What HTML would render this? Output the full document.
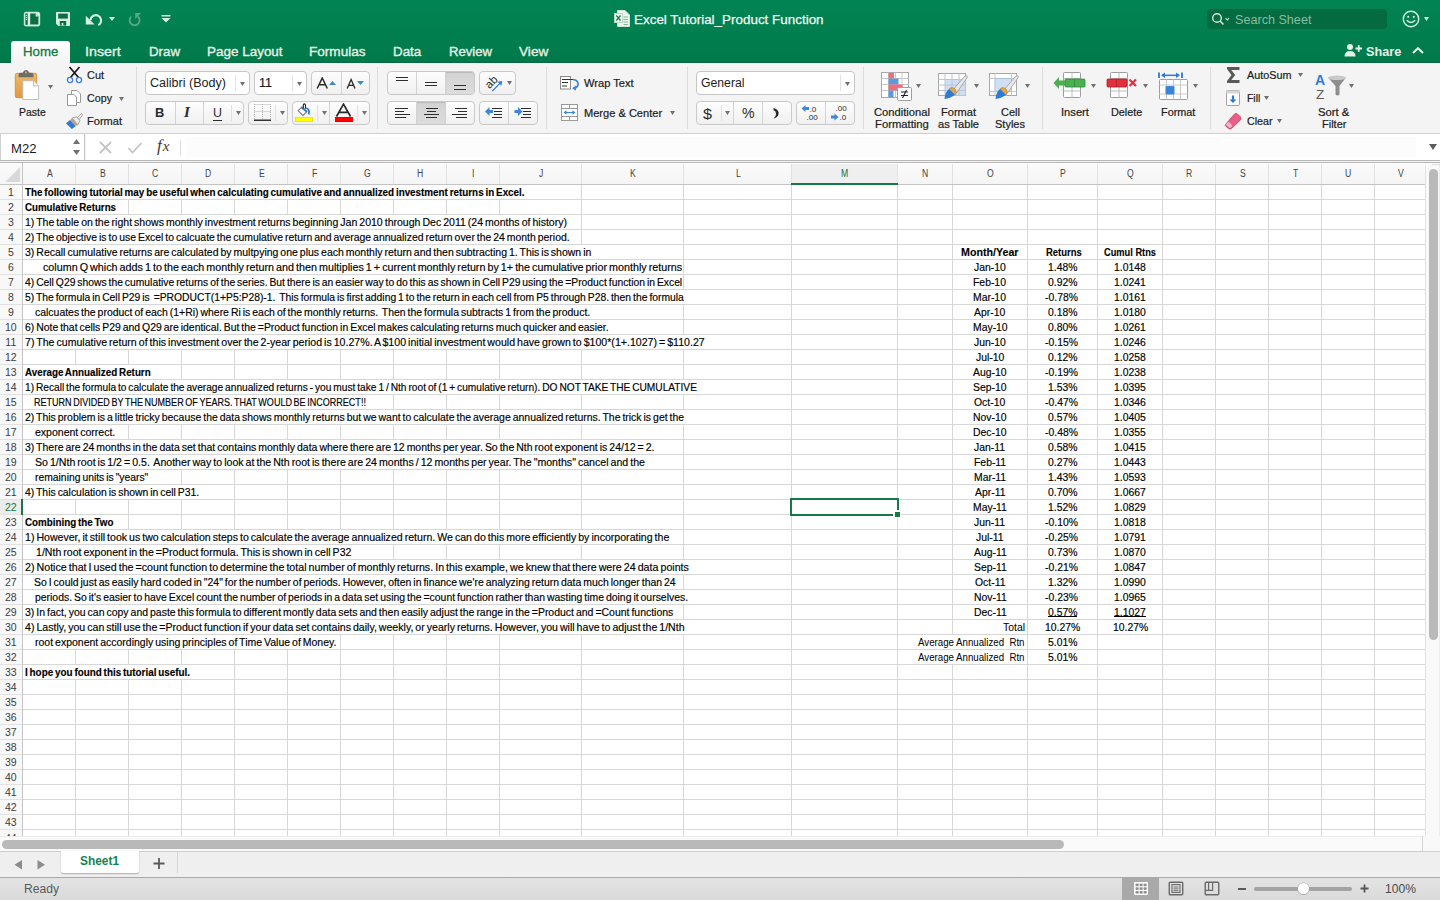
<!DOCTYPE html>
<html><head><meta charset="utf-8"><title>Excel Tutorial_Product Function</title>
<style>
html,body{margin:0;padding:0;width:1440px;height:900px;overflow:hidden;background:#fff;font-family:"Liberation Sans",sans-serif}
.a{position:absolute;display:block}
.t{position:absolute;white-space:pre;transform-origin:0 0;font-family:"Liberation Sans",sans-serif}
</style></head><body>
<div class="a" style="left:0px;top:0px;width:1440px;height:63px;background:linear-gradient(#018453,#017b4c 85%,#00784a)"></div><div class="a" style="left:0px;top:62px;width:1440px;height:1px;background:#066a42"></div><svg class="a" style="left:23px;top:11px;" width="18" height="16" viewBox="0 0 18 16"><rect x="1.3" y="1.3" width="15.4" height="13.6" rx="1.6" fill="#d9eee2" stroke="#d9eee2" stroke-width="1"/><rect x="2.4" y="2.4" width="2.3" height="11.4" fill="#0a6e40"/><circle cx="3.55" cy="4.4" r=".65" fill="#d9eee2"/><circle cx="3.55" cy="6.4" r=".65" fill="#d9eee2"/><circle cx="3.55" cy="8.4" r=".65" fill="#d9eee2"/><path d="M7.2 2.6H12.6L15.4 5.4V13.6H7.2Z" fill="#0a6e40"/><path d="M12.6 2.6V5.4H15.4" fill="#d9eee2"/></svg><svg class="a" style="left:55px;top:11px;" width="16" height="16" viewBox="0 0 16 16"><path d="M1.5 1.5H14.5V14.5H3.2L1.5 12.8Z" fill="#d9eee2" stroke="#d9eee2" stroke-linejoin="round"/><rect x="3.2" y="2.6" width="9.6" height="5" fill="#0a6e40"/><rect x="4.8" y="10" width="6.4" height="4.6" fill="#0a6e40"/><rect x="6.6" y="12" width="1.8" height="2.6" fill="#d9eee2"/></svg><svg class="a" style="left:85px;top:12px;" width="18" height="15" viewBox="0 0 18 15"><path d="M5.5 8.2A5.3 5.3 0 1 1 13.2 13.2" fill="none" stroke="#d9eee2" stroke-width="2"/><path d="M0.8 3.8V12.6H9.6Z" fill="#d9eee2"/></svg><svg class="a" style="left:109px;top:17px;" width="6" height="4" viewBox="0 0 6 4"><path d="M0 0H6L3.0 4Z" fill="#d9eee2"/></svg><svg class="a" style="left:128px;top:12px;" width="15" height="15" viewBox="0 0 15 15"><path d="M3.2 4.6A5 5 0 1 0 9.8 4.4" fill="none" stroke="#55a982" stroke-width="1.9"/><path d="M7.2 1H13.2L7.2 7Z" fill="#55a982"/></svg><svg class="a" style="left:161px;top:14px;" width="10" height="10" viewBox="0 0 10 10"><rect x="0.5" y="1" width="9" height="1.5" fill="#d9eee2"/><path d="M0.5 4H9.5L5 8.5Z" fill="#d9eee2"/></svg><svg class="a" style="left:614px;top:10px;" width="16" height="17" viewBox="0 0 16 17"><path d="M3.5 0.5H11L15.5 5V16.5H3.5Z" fill="#eef6f1" stroke="#cfe3d8"/><rect x="0.5" y="3.5" width="8" height="9" fill="#f3f9f5" stroke="#b9d8c6"/><path d="M2.3 5.5L6.5 10.5M6.5 5.5L2.3 10.5" stroke="#1d7a4c" stroke-width="1.3"/><path d="M9.5 7H14M9.5 9.5H14M9.5 12H14M9.5 14.5H14" stroke="#7db698" stroke-width="1"/></svg><div class="a" style="left:1207px;top:9px;width:180px;height:20px;background:#046a3f;border-radius:4px"></div><svg class="a" style="left:1211px;top:12px;" width="20" height="14" viewBox="0 0 20 14"><circle cx="6" cy="6" r="4.3" fill="none" stroke="#d4eadd" stroke-width="1.4"/><path d="M9 9L12.5 12.5" stroke="#d4eadd" stroke-width="1.6"/><path d="M14.5 6L16.3 8L18 6" fill="none" stroke="#d4eadd" stroke-width="1.1"/></svg><svg class="a" style="left:1401px;top:9px;" width="20" height="20" viewBox="0 0 20 20"><circle cx="10" cy="10" r="7.7" fill="none" stroke="#d9eee2" stroke-width="1.4"/><circle cx="7.2" cy="7.8" r="1.1" fill="#d9eee2"/><circle cx="12.8" cy="7.8" r="1.1" fill="#d9eee2"/><path d="M5.8 11.2Q10 15.6 14.2 11.2" fill="none" stroke="#d9eee2" stroke-width="1.5"/></svg><svg class="a" style="left:1424px;top:17px;" width="5" height="4" viewBox="0 0 5 4"><path d="M0 0H5L2.5 4Z" fill="#d9eee2"/></svg><div class="a" style="left:11px;top:41px;width:59px;height:22px;background:linear-gradient(#fefefe,#f4f4f4);border-radius:3px 3px 0 0"></div><svg class="a" style="left:1344px;top:43px;" width="19" height="14" viewBox="0 0 19 14"><circle cx="6" cy="4" r="3" fill="#e3f1e8"/><path d="M0.5 13.5Q0.5 8 6 8Q11.5 8 11.5 13.5Z" fill="#e3f1e8"/><path d="M11.5 5.5H18M14.75 2.25V8.75" stroke="#e3f1e8" stroke-width="1.8"/></svg><svg class="a" style="left:1412px;top:47px;" width="12" height="7" viewBox="0 0 12 7"><path d="M1 6L6 1.2L11 6" fill="none" stroke="#e3f1e8" stroke-width="2"/></svg><div class="a" style="left:0px;top:63px;width:1440px;height:70px;background:#f4f4f4"></div><div class="a" style="left:0px;top:133px;width:1440px;height:1px;background:#cfcfcf"></div><div class="a" style="left:0px;top:134px;width:1440px;height:26px;background:#fff"></div><div class="a" style="left:0px;top:134px;width:1px;height:26px;background:#cfcfcf"></div><div class="a" style="left:84px;top:134px;width:1px;height:26px;background:#c9c9c9"></div><div class="a" style="left:85px;top:134px;width:1px;height:26px;background:#f0f0f0"></div><div class="a" style="left:186px;top:137px;width:1230px;height:20px;background:#fcfcfc"></div><svg class="a" style="left:73px;top:139px;" width="7" height="5" viewBox="0 0 7 5"><path d="M0 5H7L3.5 0Z" fill="#707070"/></svg><svg class="a" style="left:73px;top:150px;" width="7" height="5" viewBox="0 0 7 5"><path d="M0 0H7L3.5 5Z" fill="#707070"/></svg><svg class="a" style="left:99px;top:141px;" width="13" height="13" viewBox="0 0 13 13"><path d="M1 1L12 12M12 1L1 12" stroke="#c4c4c4" stroke-width="1.8"/></svg><svg class="a" style="left:127px;top:142px;" width="16" height="12" viewBox="0 0 16 12"><path d="M1.5 6L5.5 10.5L14.5 1" fill="none" stroke="#c4c4c4" stroke-width="1.8"/></svg><div class="t" style="left:157px;top:136px;font-family:'Liberation Serif';font-style:italic;font-size:17px;line-height:20px;color:#3a3a3a">f<span style="font-size:15px;position:relative;left:1px">x</span></div><div class="a" style="left:180px;top:140px;width:1px;height:16px;background:#dedede"></div><svg class="a" style="left:1429px;top:144px;" width="8" height="6" viewBox="0 0 8 6"><path d="M0 0H8L4.0 6Z" fill="#5c5c5c"/></svg><div class="a" style="left:0px;top:160px;width:1440px;height:1px;background:#b6b6b6"></div><div class="a" style="left:0px;top:161px;width:1440px;height:1px;background:#f5f5f5"></div><div class="a" style="left:0px;top:162px;width:1440px;height:1px;background:#b6b6b6"></div><div class="a" style="left:1425px;top:163px;width:15px;height:673px;background:#f9f9f9"></div><div class="a" style="left:1425px;top:166px;width:1px;height:670px;background:#e3e3e3"></div><div class="a" style="left:1439px;top:163px;width:1px;height:688px;background:#ededed"></div><div class="a" style="left:1432px;top:164px;width:8px;height:1px;background:#e0e0e0"></div><div class="a" style="left:1429px;top:169px;width:9px;height:471px;background:#b9b9b9;border-radius:4.5px"></div><div class="a" style="left:0px;top:836px;width:1425px;height:15px;background:#fafafa"></div><div class="a" style="left:0px;top:836px;width:1425px;height:1px;background:#ececec"></div><div class="a" style="left:2px;top:840px;width:1062px;height:9px;background:#b9b9b9;border-radius:4.5px"></div><div class="a" style="left:1422px;top:836px;width:1px;height:15px;background:#d5d5d5"></div><div class="a" style="left:1425px;top:836px;width:15px;height:15px;background:#f9f9f9"></div><div class="a" style="left:0px;top:851px;width:1440px;height:1px;background:#cdcdcd"></div><div class="a" style="left:0px;top:852px;width:1440px;height:25px;background:#efefef"></div><div class="a" style="left:61px;top:851px;width:78px;height:22px;background:#fff;box-shadow:0 1px 1.5px rgba(0,0,0,.28);border-radius:0 0 2px 2px"></div><svg class="a" style="left:13px;top:858px;" width="10" height="13" viewBox="0 0 10 13"><path d="M9 2V11.5L1.5 6.75Z" fill="#8c8c8c"/></svg><svg class="a" style="left:36px;top:858px;" width="10" height="13" viewBox="0 0 10 13"><path d="M1.5 2V11.5L9 6.75Z" fill="#8c8c8c"/></svg><svg class="a" style="left:152.5px;top:857px;" width="12" height="13" viewBox="0 0 12 13"><path d="M6 1V12M0.5 6.5H11.5" stroke="#5a5a5a" stroke-width="1.8"/></svg><div class="a" style="left:177px;top:852px;width:1px;height:21px;background:#d6d6d6"></div><div class="a" style="left:0px;top:877px;width:1440px;height:1px;background:#a9a9a9"></div><div class="a" style="left:0px;top:878px;width:1440px;height:22px;background:linear-gradient(#e3e3e3,#dadada)"></div><div class="a" style="left:1122px;top:878px;width:37px;height:22px;background:#a9a9a9"></div><svg class="a" style="left:1133px;top:881px;" width="16" height="15" viewBox="0 0 16 15"><rect x="1" y="1" width="14" height="13" rx="1" fill="#fff"/><g fill="#8f8f8f"><rect x="2.6" y="2.6" width="3" height="2.6"/><rect x="6.6" y="2.6" width="3" height="2.6"/><rect x="10.6" y="2.6" width="3" height="2.6"/><rect x="2.6" y="6.3" width="3" height="2.6"/><rect x="6.6" y="6.3" width="3" height="2.6"/><rect x="10.6" y="6.3" width="3" height="2.6"/><rect x="2.6" y="10" width="3" height="2.6"/><rect x="6.6" y="10" width="3" height="2.6"/><rect x="10.6" y="10" width="3" height="2.6"/></g></svg><svg class="a" style="left:1168px;top:881px;" width="16" height="15" viewBox="0 0 16 15"><rect x="1.25" y="1.25" width="13.5" height="12.5" rx="1" fill="none" stroke="#6a6a6a" stroke-width="1.4"/><rect x="4" y="3.6" width="8" height="7.8" fill="none" stroke="#6a6a6a" stroke-width="1.1"/><path d="M5.6 6H10.4M5.6 7.8H10.4M5.6 9.6H10.4" stroke="#6a6a6a" stroke-width=".9"/></svg><svg class="a" style="left:1204px;top:881px;" width="16" height="15" viewBox="0 0 16 15"><rect x="1.25" y="1.25" width="13.5" height="12.5" rx="1" fill="none" stroke="#6a6a6a" stroke-width="1.4"/><path d="M1.25 9.3H8.6V1.25M4.6 1.25V9.3" fill="none" stroke="#6a6a6a" stroke-width="1.2"/></svg><div class="a" style="left:1238px;top:888px;width:8px;height:2px;background:#5a5a5a"></div><div class="a" style="left:1254px;top:887px;width:98px;height:3.5px;background:#a3a3a3;border-radius:2px"></div><div class="a" style="left:1298px;top:882.5px;width:11px;height:11px;border-radius:50%;background:#fff;box-shadow:0 0 0 0.6px #b0b0b0,0 1px 1px rgba(0,0,0,.2)"></div><svg class="a" style="left:1360px;top:884px;" width="9" height="9" viewBox="0 0 9 9"><path d="M4.5 0.5V8.5M0.5 4.5H8.5" stroke="#555" stroke-width="1.8"/></svg><div class="a" style="left:136px;top:67px;width:1px;height:62px;background:#dcdcdc"></div><div class="a" style="left:377px;top:67px;width:1px;height:62px;background:#dcdcdc"></div><div class="a" style="left:546px;top:67px;width:1px;height:62px;background:#dcdcdc"></div><div class="a" style="left:687px;top:67px;width:1px;height:62px;background:#dcdcdc"></div><div class="a" style="left:863px;top:67px;width:1px;height:62px;background:#dcdcdc"></div><div class="a" style="left:1042px;top:67px;width:1px;height:62px;background:#dcdcdc"></div><div class="a" style="left:1210px;top:67px;width:1px;height:62px;background:#dcdcdc"></div><svg class="a" style="left:14px;top:69px;" width="26" height="32" viewBox="0 0 26 32"><defs><linearGradient id="cb" x1="0" y1="0" x2="0" y2="1"><stop offset="0" stop-color="#f0b868"/><stop offset="1" stop-color="#e09a3c"/></linearGradient></defs><rect x="1.3" y="4.3" width="21.4" height="24.4" rx="1.8" fill="url(#cb)" stroke="#c98a35" stroke-width=".8"/><path d="M4.5 8.3V6Q4.5 3.8 7 3.8H8.8Q9.5 1 12 1Q14.5 1 15.2 3.8H17Q19.5 3.8 19.5 6V8.3Z" fill="#6d6d6d"/><circle cx="12" cy="3.4" r="1" fill="#e8a94f"/><path d="M8.8 11.8H19.5L24.6 16.9V30.5H8.8Z" fill="#fff" stroke="#b9b9b9" stroke-width=".9" stroke-linejoin="round"/><path d="M19.5 11.8V16.9H24.6" fill="#f3f3f3" stroke="#b9b9b9" stroke-width=".9" stroke-linejoin="round"/></svg><svg class="a" style="left:48px;top:85px;" width="5" height="4" viewBox="0 0 5 4"><path d="M0 0H5L2.5 4Z" fill="#707070"/></svg><svg class="a" style="left:66px;top:66px;" width="17" height="18" viewBox="0 0 17 18"><path d="M3.5 1L12.5 11.5M13.5 1L4.5 11.5" stroke="#1a1a1a" stroke-width="1.7"/><circle cx="4" cy="14" r="2.6" fill="none" stroke="#3d7fd6" stroke-width="1.3"/><circle cx="13" cy="14" r="2.6" fill="none" stroke="#3d7fd6" stroke-width="1.3"/></svg><svg class="a" style="left:66px;top:89px;" width="17" height="18" viewBox="0 0 17 18"><path d="M5.5 1.5H11L14.5 5V13.5H5.5Z" fill="#fff" stroke="#9a9a9a"/><path d="M1.5 5.5H8L10.5 8V16.5H1.5Z" fill="#fff" stroke="#9a9a9a"/></svg><svg class="a" style="left:119px;top:97px;" width="5" height="4" viewBox="0 0 5 4"><path d="M0 0H5L2.5 4Z" fill="#707070"/></svg><svg class="a" style="left:65px;top:112px;" width="18" height="18" viewBox="0 0 18 18"><path d="M11.5 6.5L15.6 2.2Q17.3 0.9 17.8 2.6L14 8Z" fill="#f2f2f2" stroke="#8f8f8f" stroke-width=".8"/><path d="M6.8 6.2L11.6 4.8L15 8.6L12.6 13.2Z" fill="#ececec" stroke="#8f8f8f" stroke-width=".8"/><path d="M5 8L7.6 6L12.8 12.2L10.6 14.3Z" fill="#b5a48c"/><path d="M1 11.2L5 8L10.6 14.3L6.8 17Z" fill="#2f7ad6"/></svg><div class="a" style="left:145px;top:71px;width:105px;height:24px;box-sizing:border-box;border:1px solid #c6c6c6;border-radius:4px;background:#fff"></div><div class="a" style="left:235px;top:75px;width:1px;height:16px;background:#e2e2e2"></div><svg class="a" style="left:240px;top:82px;" width="5" height="4" viewBox="0 0 5 4"><path d="M0 0H5L2.5 4Z" fill="#707070"/></svg><div class="a" style="left:254px;top:71px;width:53px;height:24px;box-sizing:border-box;border:1px solid #c6c6c6;border-radius:4px;background:#fff"></div><div class="a" style="left:292px;top:75px;width:1px;height:16px;background:#e2e2e2"></div><svg class="a" style="left:297px;top:82px;" width="5" height="4" viewBox="0 0 5 4"><path d="M0 0H5L2.5 4Z" fill="#707070"/></svg><div class="a" style="left:311px;top:71px;width:59px;height:24px;box-sizing:border-box;border:1px solid #c9c9c9;border-radius:4px;background:linear-gradient(#fdfdfd,#f0f0f0)"></div><div class="a" style="left:341px;top:72px;width:1px;height:22px;background:#d3d3d3"></div><svg class="a" style="left:316px;top:77px;" width="13" height="12" viewBox="0 0 13 12"><path d="M1.2 11.5L6.25 1L11.3 11.5M3 7.8H9.5" fill="none" stroke="#2a2a2a" stroke-width="1.5" stroke-linejoin="miter"/></svg><svg class="a" style="left:329px;top:80.5px;" width="7" height="4" viewBox="0 0 7 4"><path d="M0 4H7L3.5 0Z" fill="#3d86d8"/></svg><svg class="a" style="left:346px;top:78px;" width="11" height="11" viewBox="0 0 11 11"><path d="M1.2 10.5L5.1 1.5L9 10.5M2.6 7.3H7.6" fill="none" stroke="#2a2a2a" stroke-width="1.3"/></svg><svg class="a" style="left:356.5px;top:81px;" width="7" height="4" viewBox="0 0 7 4"><path d="M0 0H7L3.5 4Z" fill="#3d86d8"/></svg><div class="a" style="left:145px;top:101px;width:99px;height:24px;box-sizing:border-box;border:1px solid #c9c9c9;border-radius:4px;background:linear-gradient(#fdfdfd,#f0f0f0)"></div><div class="a" style="left:175px;top:102px;width:1px;height:22px;background:#d3d3d3"></div><div class="a" style="left:203px;top:102px;width:1px;height:22px;background:#d3d3d3"></div><div class="a" style="left:231px;top:105px;width:1px;height:16px;background:#e0e0e0"></div><div class="t" style="left:184px;top:104px;font-family:'Liberation Serif';font-style:italic;font-size:15px;line-height:16px;color:#2a2a2a;font-weight:700">I</div><div class="a" style="left:213px;top:119.5px;width:9px;height:1.3px;background:#2a2a2a"></div><svg class="a" style="left:236px;top:111px;" width="5" height="4" viewBox="0 0 5 4"><path d="M0 0H5L2.5 4Z" fill="#707070"/></svg><div class="a" style="left:248px;top:101px;width:40px;height:24px;box-sizing:border-box;border:1px solid #c9c9c9;border-radius:4px;background:linear-gradient(#fdfdfd,#f0f0f0)"></div><div class="a" style="left:275px;top:105px;width:1px;height:16px;background:#e0e0e0"></div><svg class="a" style="left:254px;top:103px;" width="18" height="19" viewBox="0 0 18 19"><g stroke="#b5b5b5" stroke-width="1" stroke-dasharray="1 1"><path d="M0.5 1V16M8.5 1V16M16.5 1V16M0.5 1.5H17M0.5 8.5H17"/></g><rect x="0" y="16.5" width="17" height="1.5" fill="#333"/></svg><svg class="a" style="left:280px;top:111px;" width="5" height="4" viewBox="0 0 5 4"><path d="M0 0H5L2.5 4Z" fill="#707070"/></svg><div class="a" style="left:292px;top:101px;width:78px;height:24px;box-sizing:border-box;border:1px solid #c9c9c9;border-radius:4px;background:linear-gradient(#fdfdfd,#f0f0f0)"></div><div class="a" style="left:317px;top:105px;width:1px;height:16px;background:#e0e0e0"></div><div class="a" style="left:329px;top:102px;width:1px;height:22px;background:#d3d3d3"></div><div class="a" style="left:357px;top:105px;width:1px;height:16px;background:#e0e0e0"></div><svg class="a" style="left:292px;top:100px;" width="22" height="18" viewBox="0 0 22 18"><path d="M6.2 10.6L10 6.8L14.9 11.3L11 15.6Z" fill="#fff" stroke="#7a7a7a" stroke-width="1.1" stroke-linejoin="round"/><path d="M9.4 7.3L14.9 11.9" stroke="#2f7ad6" stroke-width="1.7"/><path d="M13.5 8.8V5Q12.5 2.8 11.3 4.8V8.2" fill="none" stroke="#222" stroke-width="1.1"/><path d="M14.3 8Q18.2 9.5 16.6 14.4" fill="none" stroke="#2f7ad6" stroke-width="1.8"/></svg><div class="a" style="left:295px;top:117px;width:18px;height:5px;background:#ffff00;box-shadow:inset 0 0 0 0.6px #dada00;border-radius:1px"></div><svg class="a" style="left:322px;top:111px;" width="5" height="4" viewBox="0 0 5 4"><path d="M0 0H5L2.5 4Z" fill="#707070"/></svg><svg class="a" style="left:334px;top:103px;" width="19" height="14" viewBox="0 0 19 14"><path d="M2.5 13.5L9.5 1.2L16.5 13.5M5 9.3H14" fill="none" stroke="#2a2a2a" stroke-width="1.7"/></svg><div class="a" style="left:335px;top:117px;width:18px;height:5px;background:#ff0000;box-shadow:inset 0 0 0 0.6px #d40000;border-radius:1px"></div><svg class="a" style="left:362px;top:111px;" width="5" height="4" viewBox="0 0 5 4"><path d="M0 0H5L2.5 4Z" fill="#707070"/></svg><div class="a" style="left:387px;top:71px;width:88px;height:24px;box-sizing:border-box;border:1px solid #c9c9c9;border-radius:4px;background:linear-gradient(#fdfdfd,#f0f0f0)"></div><div class="a" style="left:416px;top:72px;width:1px;height:22px;background:#d3d3d3"></div><div class="a" style="left:445px;top:72px;width:1px;height:22px;background:#d3d3d3"></div><div class="a" style="left:446px;top:72px;width:28px;height:22px;background:linear-gradient(#d3d3d3,#dcdcdc);box-shadow:inset 0 1px 1px rgba(0,0,0,.12);border-radius:0px 3px 3px 0px"></div><div class="a" style="left:396px;top:77px;width:12px;height:1px;background:#2e2e2e"></div><div class="a" style="left:396px;top:80px;width:12px;height:1px;background:#2e2e2e"></div><div class="a" style="left:425px;top:82px;width:12px;height:1px;background:#2e2e2e"></div><div class="a" style="left:425px;top:85px;width:12px;height:1px;background:#2e2e2e"></div><div class="a" style="left:454px;top:85px;width:12px;height:1px;background:#2e2e2e"></div><div class="a" style="left:454px;top:89px;width:12px;height:1px;background:#2e2e2e"></div><div class="a" style="left:479px;top:71px;width:37px;height:24px;box-sizing:border-box;border:1px solid #c9c9c9;border-radius:4px;background:linear-gradient(#fdfdfd,#f0f0f0)"></div><svg class="a" style="left:482px;top:72px;" width="24" height="22" viewBox="0 0 24 22"><text x="0" y="0" text-anchor="middle" transform="translate(12 12.8) rotate(-45)" font-family="Liberation Sans" font-size="11.5" fill="#2a2a2a">ab</text><path d="M10.3 19L18.5 10.8" stroke="#2f7ad6" stroke-width="1.1"/><path d="M20.2 9L15.5 9.8L19.4 13.7Z" fill="#2f7ad6"/></svg><svg class="a" style="left:507px;top:81px;" width="5" height="4" viewBox="0 0 5 4"><path d="M0 0H5L2.5 4Z" fill="#707070"/></svg><div class="a" style="left:387px;top:101px;width:88px;height:24px;box-sizing:border-box;border:1px solid #c9c9c9;border-radius:4px;background:linear-gradient(#fdfdfd,#f0f0f0)"></div><div class="a" style="left:416px;top:102px;width:1px;height:22px;background:#d3d3d3"></div><div class="a" style="left:445px;top:102px;width:1px;height:22px;background:#d3d3d3"></div><div class="a" style="left:417px;top:102px;width:28px;height:22px;background:linear-gradient(#d3d3d3,#dcdcdc);box-shadow:inset 0 1px 1px rgba(0,0,0,.12);border-radius:0px 0px 0px 0px"></div><div class="a" style="left:395px;top:107.8px;width:12.5px;height:1.3px;background:#2e2e2e"></div><div class="a" style="left:395px;top:110.9px;width:9px;height:1.3px;background:#2e2e2e"></div><div class="a" style="left:395px;top:113.9px;width:15px;height:1.3px;background:#2e2e2e"></div><div class="a" style="left:395px;top:117px;width:11px;height:1.3px;background:#2e2e2e"></div><div class="a" style="left:425.5px;top:107.8px;width:12.0px;height:1.3px;background:#2e2e2e"></div><div class="a" style="left:427px;top:110.9px;width:9px;height:1.3px;background:#2e2e2e"></div><div class="a" style="left:424px;top:113.9px;width:15px;height:1.3px;background:#2e2e2e"></div><div class="a" style="left:426px;top:117px;width:11px;height:1.3px;background:#2e2e2e"></div><div class="a" style="left:454.5px;top:107.8px;width:12.5px;height:1.3px;background:#2e2e2e"></div><div class="a" style="left:458px;top:110.9px;width:9px;height:1.3px;background:#2e2e2e"></div><div class="a" style="left:452px;top:113.9px;width:15px;height:1.3px;background:#2e2e2e"></div><div class="a" style="left:456px;top:117px;width:11px;height:1.3px;background:#2e2e2e"></div><div class="a" style="left:479px;top:101px;width:59px;height:24px;box-sizing:border-box;border:1px solid #c9c9c9;border-radius:4px;background:linear-gradient(#fdfdfd,#f0f0f0)"></div><div class="a" style="left:508px;top:102px;width:1px;height:22px;background:#d3d3d3"></div><svg class="a" style="left:484px;top:105px;" width="20" height="14" viewBox="0 0 20 14"><path d="M1 6.5L5.5 2V5H9V8H5.5V11Z" fill="#3d86d8"/><path d="M8 3.5H18M10 6.5H18M10 9.5H18M8 12.5H18" stroke="#2e2e2e" stroke-width="1"/></svg><svg class="a" style="left:513px;top:105px;" width="20" height="14" viewBox="0 0 20 14"><path d="M9.5 6.5L5 2V5H1.5V8H5V11Z" fill="#3d86d8"/><path d="M8 3.5H18M10 6.5H18M10 9.5H18M8 12.5H18" stroke="#2e2e2e" stroke-width="1"/></svg><svg class="a" style="left:559px;top:76px;" width="22" height="15" viewBox="0 0 22 15"><rect x="1.5" y="0.5" width="10" height="12.5" fill="#fff" stroke="#8a8a8a"/><path d="M3 3.5H14M3 6.5H9M3 10H8" stroke="#333" stroke-width="1"/><path d="M14 3.5Q19.5 4 19 9Q18 12.2 14.5 12" fill="none" stroke="#3d86d8" stroke-width="1.7"/><path d="M17 9.5L13.2 12.2L16.8 14.8Z" fill="#3d86d8"/></svg><svg class="a" style="left:560px;top:103px;" width="19" height="18" viewBox="0 0 19 18"><rect x="1.5" y="1.5" width="16" height="16" fill="#fff" stroke="#9a9a9a"/><path d="M1.5 5.5H17.5M1.5 13.5H17.5M9.5 1.5V5.5M9.5 13.5V17.5" stroke="#9a9a9a"/><path d="M5 9.5H14" stroke="#3d86d8" stroke-width="1.2"/><path d="M3.5 9.5L6.5 7.2V11.8Z M15.5 9.5L12.5 7.2V11.8Z" fill="#3d86d8"/></svg><svg class="a" style="left:670px;top:111px;" width="5" height="4" viewBox="0 0 5 4"><path d="M0 0H5L2.5 4Z" fill="#707070"/></svg><div class="a" style="left:696px;top:71px;width:159px;height:24px;box-sizing:border-box;border:1px solid #c6c6c6;border-radius:4px;background:#fff"></div><div class="a" style="left:840px;top:75px;width:1px;height:16px;background:#e2e2e2"></div><svg class="a" style="left:845px;top:82px;" width="5" height="4" viewBox="0 0 5 4"><path d="M0 0H5L2.5 4Z" fill="#707070"/></svg><div class="a" style="left:696px;top:101px;width:96px;height:24px;box-sizing:border-box;border:1px solid #c9c9c9;border-radius:4px;background:linear-gradient(#fdfdfd,#f0f0f0)"></div><div class="a" style="left:721px;top:105px;width:1px;height:16px;background:#e0e0e0"></div><div class="a" style="left:733px;top:102px;width:1px;height:22px;background:#d3d3d3"></div><div class="a" style="left:762px;top:102px;width:1px;height:22px;background:#d3d3d3"></div><svg class="a" style="left:725px;top:111px;" width="5" height="4" viewBox="0 0 5 4"><path d="M0 0H5L2.5 4Z" fill="#707070"/></svg><svg class="a" style="left:771px;top:107px;" width="10" height="12" viewBox="0 0 10 12"><path d="M2.5 1Q8.5 2.5 7.5 7.5Q6.5 10.5 2.5 11.5Q5.5 9 5 6.5Q4.8 3.8 2.5 3.2Z" fill="#2a2a2a"/></svg><div class="a" style="left:796px;top:101px;width:59px;height:24px;box-sizing:border-box;border:1px solid #c9c9c9;border-radius:4px;background:linear-gradient(#fdfdfd,#f0f0f0)"></div><div class="a" style="left:825px;top:102px;width:1px;height:22px;background:#d3d3d3"></div><svg class="a" style="left:800px;top:104px;" width="24" height="18" viewBox="0 0 24 18"><path d="M1.5 4.5L5.5 1V3H9V6H5.5V8Z" fill="#3d86d8"/><text x="9.5" y="7.5" font-family="Liberation Sans" font-size="8" fill="#2a2a2a">.0</text><text x="6.5" y="15.5" font-family="Liberation Sans" font-size="8" fill="#2a2a2a">.00</text></svg><svg class="a" style="left:829px;top:104px;" width="24" height="18" viewBox="0 0 24 18"><text x="6.5" y="7" font-family="Liberation Sans" font-size="8" fill="#2a2a2a">.00</text><path d="M9.5 13L5.5 9.5V11.5H2V14.5H5.5V16.5Z" fill="#3d86d8"/><text x="10.5" y="15.5" font-family="Liberation Sans" font-size="8" fill="#2a2a2a">.0</text></svg><svg class="a" style="left:881px;top:72px;" width="32" height="30" viewBox="0 0 32 30"><rect x="0.5" y="0.5" width="27" height="25" fill="#fff" stroke="#a8a8a8"/><path d="M7.5 0.5V25.5M14.5 0.5V25.5M21 0.5V25.5M0.5 6.5H27.5M0.5 12.5H27.5M0.5 18.5H27.5" stroke="#c8c8c8"/><rect x="7.5" y="1" width="5.5" height="5.5" fill="#ef6d78"/><rect x="7.5" y="6.5" width="10" height="6" fill="#5a9be0"/><rect x="7.5" y="12.5" width="14" height="6" fill="#ef6d78"/><rect x="7.5" y="18.5" width="5" height="7" fill="#5a9be0"/><rect x="16.5" y="15.5" width="14" height="13" rx="1" fill="#fff" stroke="#a0a0a0"/><path d="M20 20H27M20 23.5H27M25.5 18L21.5 26" stroke="#222" stroke-width="1.1"/></svg><svg class="a" style="left:916px;top:84px;" width="5" height="4" viewBox="0 0 5 4"><path d="M0 0H5L2.5 4Z" fill="#707070"/></svg><svg class="a" style="left:938px;top:73px;" width="34" height="28" viewBox="0 0 34 28"><rect x="0.5" y="0.5" width="27" height="22" fill="#fff" stroke="#a8a8a8"/><rect x="7" y="6.5" width="20.5" height="16" fill="#cfe0f3"/><path d="M7 0.5V22.5M14 0.5V22.5M21 0.5V22.5M0.5 6.5H27.5M0.5 12H27.5M0.5 17.5H27.5" stroke="#b9c5d2"/><path d="M14.5 17.5L26.5 3.5Q29 1.5 29.5 4L18.5 20Z" fill="#e8e8e8" stroke="#9b9b9b" stroke-width=".8"/><path d="M11 16Q14 13 17.5 16.5Q19.5 19.5 17 22Z" fill="#e0a550" stroke="#b07a2e" stroke-width=".6"/><path d="M11 16Q7 19 6.5 26Q13 25 17 22Z" fill="#2f7ad6"/></svg><svg class="a" style="left:974px;top:84px;" width="5" height="4" viewBox="0 0 5 4"><path d="M0 0H5L2.5 4Z" fill="#707070"/></svg><svg class="a" style="left:989px;top:73px;" width="34" height="28" viewBox="0 0 34 28"><rect x="0.5" y="0.5" width="27" height="22" fill="#fff" stroke="#a8a8a8"/><rect x="6" y="5.5" width="16.5" height="13" fill="#cfe0f3" stroke="#a9c2de"/><path d="M6 0.5V5.5M22.5 0.5V5.5M0.5 5.5H6M22.5 5.5H27.5M0.5 18.5H6M22.5 18.5H27.5M6 18.5V22.5M22.5 18.5V22.5" stroke="#c8c8c8"/><path d="M14.5 17.5L26.5 3.5Q29 1.5 29.5 4L18.5 20Z" fill="#e8e8e8" stroke="#9b9b9b" stroke-width=".8"/><path d="M11 16Q14 13 17.5 16.5Q19.5 19.5 17 22Z" fill="#e0a550" stroke="#b07a2e" stroke-width=".6"/><path d="M11 16Q7 19 6.5 26Q13 25 17 22Z" fill="#2f7ad6"/></svg><svg class="a" style="left:1025px;top:84px;" width="5" height="4" viewBox="0 0 5 4"><path d="M0 0H5L2.5 4Z" fill="#707070"/></svg><svg class="a" style="left:1053px;top:72px;" width="34" height="28" viewBox="0 0 34 28"><rect x="10.5" y="0.5" width="17" height="25" rx="1" fill="#fff" stroke="#9d9d9d"/><path d="M19 0.5V25.5M10.5 6.5H27.5M10.5 19H27.5M10.5 13H27.5" stroke="#bcbcbc"/><rect x="12" y="7" width="20" height="8" rx="1" fill="#4caf50" stroke="#2e8b3a" stroke-width=".8"/><path d="M21.5 7V15" stroke="#2e8b3a" stroke-width=".8"/><path d="M0.5 11L6 5V8.5H12V13.5H6V17Z" fill="#4caf50"/></svg><svg class="a" style="left:1091px;top:84px;" width="5" height="4" viewBox="0 0 5 4"><path d="M0 0H5L2.5 4Z" fill="#707070"/></svg><svg class="a" style="left:1106px;top:72px;" width="34" height="28" viewBox="0 0 34 28"><rect x="4.5" y="0.5" width="17" height="25" rx="1" fill="#fff" stroke="#9d9d9d"/><path d="M13 0.5V25.5M4.5 6.5H21.5M4.5 19H21.5M4.5 13H21.5" stroke="#bcbcbc"/><rect x="1" y="7" width="20" height="8" rx="1" fill="#e0303e" stroke="#b31d2a" stroke-width=".8"/><path d="M10.5 7V15" stroke="#b31d2a" stroke-width=".8"/><path d="M23.5 7.5L30 14M30 7.5L23.5 14" stroke="#e0303e" stroke-width="2.2"/></svg><svg class="a" style="left:1143px;top:84px;" width="5" height="4" viewBox="0 0 5 4"><path d="M0 0H5L2.5 4Z" fill="#707070"/></svg><svg class="a" style="left:1158px;top:71px;" width="32" height="30" viewBox="0 0 32 30"><path d="M1 1.5V7M24 1.5V7" stroke="#2f7ad6" stroke-width="1.8"/><path d="M4 4.3H21" stroke="#2f7ad6" stroke-width="1.5"/><path d="M3 4.3L7 1.5V7Z M22 4.3L18 1.5V7Z" fill="#2f7ad6"/><rect x="1.5" y="8.5" width="28" height="20" rx="1" fill="#fff" stroke="#9d9d9d"/><path d="M1.5 14H29.5M1.5 23H29.5M8.5 8.5V28.5M15.5 8.5V28.5M22.5 8.5V28.5" stroke="#c9c9c9"/><rect x="7.5" y="15" width="9" height="8.5" rx="1" fill="#3a86d6"/></svg><svg class="a" style="left:1193px;top:84px;" width="5" height="4" viewBox="0 0 5 4"><path d="M0 0H5L2.5 4Z" fill="#707070"/></svg><svg class="a" style="left:1226px;top:66px;" width="15" height="18" viewBox="0 0 15 18"><path d="M1 1H13.5V4H5.3L9.2 9L5.3 14H13.5V17H1V15L5.5 9L1 3Z" fill="#5a5a5a"/></svg><svg class="a" style="left:1298px;top:73px;" width="5" height="4" viewBox="0 0 5 4"><path d="M0 0H5L2.5 4Z" fill="#707070"/></svg><svg class="a" style="left:1225px;top:89px;" width="16" height="18" viewBox="0 0 16 18"><rect x="1.5" y="1.5" width="13" height="15" rx="1" fill="#fff" stroke="#a2a2a2"/><rect x="1.5" y="1.5" width="13" height="3" fill="#d6d6d6"/><path d="M8 6.5V11.5" stroke="#2f7ad6" stroke-width="2.2"/><path d="M4.5 10.5H11.5L8 14Z" fill="#2f7ad6"/></svg><svg class="a" style="left:1264px;top:96px;" width="5" height="4" viewBox="0 0 5 4"><path d="M0 0H5L2.5 4Z" fill="#707070"/></svg><svg class="a" style="left:1224px;top:112px;" width="18" height="18" viewBox="0 0 18 18"><path d="M1.5 12.5L10.5 2Q12 0.8 13.5 2L16.5 5Q17.5 6.5 16.5 8L7.5 16.5Q6 17.5 4.5 16.5L1.5 14Q0.8 13.3 1.5 12.5Z" fill="#e85d8a" stroke="#c23d6b" stroke-width=".8"/><path d="M1.5 12.5L4.8 9.8L8.5 13.5L6 16.3Z" fill="#f6b3c9"/></svg><svg class="a" style="left:1277px;top:119px;" width="5" height="4" viewBox="0 0 5 4"><path d="M0 0H5L2.5 4Z" fill="#707070"/></svg><svg class="a" style="left:1314px;top:72px;" width="34" height="28" viewBox="0 0 34 28"><text x="1" y="13" font-family="Liberation Sans" font-size="14" font-weight="700" fill="#2f7ad6">A</text><text x="2" y="26.5" font-family="Liberation Sans" font-size="13.5" fill="#5a5a5a">Z</text><path d="M14 5.5Q23 3 32 5.5L25.5 14V22.5Q23.5 24.5 21.5 22.5V14Z" fill="#8e8e8e"/><ellipse cx="23" cy="5.8" rx="8.8" ry="2.3" fill="#c9c9c9"/></svg><svg class="a" style="left:1349px;top:84px;" width="5" height="4" viewBox="0 0 5 4"><path d="M0 0H5L2.5 4Z" fill="#707070"/></svg><div class="a" style="left:0px;top:163px;width:1425px;height:1px;background:#fff"></div><div class="a" style="left:0px;top:164px;width:1425px;height:20px;background:linear-gradient(#fafafa,#f5f5f5)"></div><div class="a" style="left:0px;top:184px;width:22px;height:652px;background:#f8f8f8"></div><svg class="a" style="left:4px;top:166px;" width="17" height="17" viewBox="0 0 17 17"><path d="M16 1V16H1.3Z" fill="#d9d9d9"/></svg><div class="a" style="left:792px;top:164px;width:105px;height:20px;background:#efefef"></div><div class="a" style="left:0px;top:499px;width:22px;height:15px;background:#ececec"></div><svg class="a" style="left:0;top:0" width="1440" height="900" shape-rendering="crispEdges"><rect x="23" y="199" width="1402" height="1" fill="#d7d7d7"/><rect x="0" y="199" width="22" height="1" fill="#e2e2e2"/><rect x="23" y="214" width="1402" height="1" fill="#d7d7d7"/><rect x="0" y="214" width="22" height="1" fill="#e2e2e2"/><rect x="23" y="229" width="1402" height="1" fill="#d7d7d7"/><rect x="0" y="229" width="22" height="1" fill="#e2e2e2"/><rect x="23" y="244" width="1402" height="1" fill="#d7d7d7"/><rect x="0" y="244" width="22" height="1" fill="#e2e2e2"/><rect x="23" y="259" width="1402" height="1" fill="#d7d7d7"/><rect x="0" y="259" width="22" height="1" fill="#e2e2e2"/><rect x="23" y="274" width="1402" height="1" fill="#d7d7d7"/><rect x="0" y="274" width="22" height="1" fill="#e2e2e2"/><rect x="23" y="289" width="1402" height="1" fill="#d7d7d7"/><rect x="0" y="289" width="22" height="1" fill="#e2e2e2"/><rect x="23" y="304" width="1402" height="1" fill="#d7d7d7"/><rect x="0" y="304" width="22" height="1" fill="#e2e2e2"/><rect x="23" y="319" width="1402" height="1" fill="#d7d7d7"/><rect x="0" y="319" width="22" height="1" fill="#e2e2e2"/><rect x="23" y="334" width="1402" height="1" fill="#d7d7d7"/><rect x="0" y="334" width="22" height="1" fill="#e2e2e2"/><rect x="23" y="349" width="1402" height="1" fill="#d7d7d7"/><rect x="0" y="349" width="22" height="1" fill="#e2e2e2"/><rect x="23" y="364" width="1402" height="1" fill="#d7d7d7"/><rect x="0" y="364" width="22" height="1" fill="#e2e2e2"/><rect x="23" y="379" width="1402" height="1" fill="#d7d7d7"/><rect x="0" y="379" width="22" height="1" fill="#e2e2e2"/><rect x="23" y="394" width="1402" height="1" fill="#d7d7d7"/><rect x="0" y="394" width="22" height="1" fill="#e2e2e2"/><rect x="23" y="409" width="1402" height="1" fill="#d7d7d7"/><rect x="0" y="409" width="22" height="1" fill="#e2e2e2"/><rect x="23" y="424" width="1402" height="1" fill="#d7d7d7"/><rect x="0" y="424" width="22" height="1" fill="#e2e2e2"/><rect x="23" y="439" width="1402" height="1" fill="#d7d7d7"/><rect x="0" y="439" width="22" height="1" fill="#e2e2e2"/><rect x="23" y="454" width="1402" height="1" fill="#d7d7d7"/><rect x="0" y="454" width="22" height="1" fill="#e2e2e2"/><rect x="23" y="469" width="1402" height="1" fill="#d7d7d7"/><rect x="0" y="469" width="22" height="1" fill="#e2e2e2"/><rect x="23" y="484" width="1402" height="1" fill="#d7d7d7"/><rect x="0" y="484" width="22" height="1" fill="#e2e2e2"/><rect x="23" y="499" width="1402" height="1" fill="#d7d7d7"/><rect x="0" y="499" width="22" height="1" fill="#e2e2e2"/><rect x="23" y="514" width="1402" height="1" fill="#d7d7d7"/><rect x="0" y="514" width="22" height="1" fill="#e2e2e2"/><rect x="23" y="529" width="1402" height="1" fill="#d7d7d7"/><rect x="0" y="529" width="22" height="1" fill="#e2e2e2"/><rect x="23" y="544" width="1402" height="1" fill="#d7d7d7"/><rect x="0" y="544" width="22" height="1" fill="#e2e2e2"/><rect x="23" y="559" width="1402" height="1" fill="#d7d7d7"/><rect x="0" y="559" width="22" height="1" fill="#e2e2e2"/><rect x="23" y="574" width="1402" height="1" fill="#d7d7d7"/><rect x="0" y="574" width="22" height="1" fill="#e2e2e2"/><rect x="23" y="589" width="1402" height="1" fill="#d7d7d7"/><rect x="0" y="589" width="22" height="1" fill="#e2e2e2"/><rect x="23" y="604" width="1402" height="1" fill="#d7d7d7"/><rect x="0" y="604" width="22" height="1" fill="#e2e2e2"/><rect x="23" y="619" width="1402" height="1" fill="#d7d7d7"/><rect x="0" y="619" width="22" height="1" fill="#e2e2e2"/><rect x="23" y="634" width="1402" height="1" fill="#d7d7d7"/><rect x="0" y="634" width="22" height="1" fill="#e2e2e2"/><rect x="23" y="649" width="1402" height="1" fill="#d7d7d7"/><rect x="0" y="649" width="22" height="1" fill="#e2e2e2"/><rect x="23" y="664" width="1402" height="1" fill="#d7d7d7"/><rect x="0" y="664" width="22" height="1" fill="#e2e2e2"/><rect x="23" y="679" width="1402" height="1" fill="#d7d7d7"/><rect x="0" y="679" width="22" height="1" fill="#e2e2e2"/><rect x="23" y="694" width="1402" height="1" fill="#d7d7d7"/><rect x="0" y="694" width="22" height="1" fill="#e2e2e2"/><rect x="23" y="709" width="1402" height="1" fill="#d7d7d7"/><rect x="0" y="709" width="22" height="1" fill="#e2e2e2"/><rect x="23" y="724" width="1402" height="1" fill="#d7d7d7"/><rect x="0" y="724" width="22" height="1" fill="#e2e2e2"/><rect x="23" y="739" width="1402" height="1" fill="#d7d7d7"/><rect x="0" y="739" width="22" height="1" fill="#e2e2e2"/><rect x="23" y="754" width="1402" height="1" fill="#d7d7d7"/><rect x="0" y="754" width="22" height="1" fill="#e2e2e2"/><rect x="23" y="769" width="1402" height="1" fill="#d7d7d7"/><rect x="0" y="769" width="22" height="1" fill="#e2e2e2"/><rect x="23" y="784" width="1402" height="1" fill="#d7d7d7"/><rect x="0" y="784" width="22" height="1" fill="#e2e2e2"/><rect x="23" y="799" width="1402" height="1" fill="#d7d7d7"/><rect x="0" y="799" width="22" height="1" fill="#e2e2e2"/><rect x="23" y="814" width="1402" height="1" fill="#d7d7d7"/><rect x="0" y="814" width="22" height="1" fill="#e2e2e2"/><rect x="23" y="829" width="1402" height="1" fill="#d7d7d7"/><rect x="0" y="829" width="22" height="1" fill="#e2e2e2"/><rect x="75" y="349" width="1" height="15" fill="#d7d7d7"/><rect x="75" y="499" width="1" height="15" fill="#d7d7d7"/><rect x="75" y="649" width="1" height="15" fill="#d7d7d7"/><rect x="75" y="679" width="1" height="15" fill="#d7d7d7"/><rect x="75" y="694" width="1" height="15" fill="#d7d7d7"/><rect x="75" y="709" width="1" height="15" fill="#d7d7d7"/><rect x="75" y="724" width="1" height="15" fill="#d7d7d7"/><rect x="75" y="739" width="1" height="15" fill="#d7d7d7"/><rect x="75" y="754" width="1" height="15" fill="#d7d7d7"/><rect x="75" y="769" width="1" height="15" fill="#d7d7d7"/><rect x="75" y="784" width="1" height="15" fill="#d7d7d7"/><rect x="75" y="799" width="1" height="15" fill="#d7d7d7"/><rect x="75" y="814" width="1" height="15" fill="#d7d7d7"/><rect x="75" y="829" width="1" height="7" fill="#d7d7d7"/><rect x="128" y="199" width="1" height="15" fill="#d7d7d7"/><rect x="128" y="349" width="1" height="15" fill="#d7d7d7"/><rect x="128" y="424" width="1" height="15" fill="#d7d7d7"/><rect x="128" y="499" width="1" height="15" fill="#d7d7d7"/><rect x="128" y="514" width="1" height="15" fill="#d7d7d7"/><rect x="128" y="649" width="1" height="15" fill="#d7d7d7"/><rect x="128" y="679" width="1" height="15" fill="#d7d7d7"/><rect x="128" y="694" width="1" height="15" fill="#d7d7d7"/><rect x="128" y="709" width="1" height="15" fill="#d7d7d7"/><rect x="128" y="724" width="1" height="15" fill="#d7d7d7"/><rect x="128" y="739" width="1" height="15" fill="#d7d7d7"/><rect x="128" y="754" width="1" height="15" fill="#d7d7d7"/><rect x="128" y="769" width="1" height="15" fill="#d7d7d7"/><rect x="128" y="784" width="1" height="15" fill="#d7d7d7"/><rect x="128" y="799" width="1" height="15" fill="#d7d7d7"/><rect x="128" y="814" width="1" height="15" fill="#d7d7d7"/><rect x="128" y="829" width="1" height="7" fill="#d7d7d7"/><rect x="181" y="199" width="1" height="15" fill="#d7d7d7"/><rect x="181" y="349" width="1" height="15" fill="#d7d7d7"/><rect x="181" y="364" width="1" height="15" fill="#d7d7d7"/><rect x="181" y="424" width="1" height="15" fill="#d7d7d7"/><rect x="181" y="469" width="1" height="15" fill="#d7d7d7"/><rect x="181" y="499" width="1" height="15" fill="#d7d7d7"/><rect x="181" y="514" width="1" height="15" fill="#d7d7d7"/><rect x="181" y="649" width="1" height="15" fill="#d7d7d7"/><rect x="181" y="679" width="1" height="15" fill="#d7d7d7"/><rect x="181" y="694" width="1" height="15" fill="#d7d7d7"/><rect x="181" y="709" width="1" height="15" fill="#d7d7d7"/><rect x="181" y="724" width="1" height="15" fill="#d7d7d7"/><rect x="181" y="739" width="1" height="15" fill="#d7d7d7"/><rect x="181" y="754" width="1" height="15" fill="#d7d7d7"/><rect x="181" y="769" width="1" height="15" fill="#d7d7d7"/><rect x="181" y="784" width="1" height="15" fill="#d7d7d7"/><rect x="181" y="799" width="1" height="15" fill="#d7d7d7"/><rect x="181" y="814" width="1" height="15" fill="#d7d7d7"/><rect x="181" y="829" width="1" height="7" fill="#d7d7d7"/><rect x="234" y="199" width="1" height="15" fill="#d7d7d7"/><rect x="234" y="349" width="1" height="15" fill="#d7d7d7"/><rect x="234" y="364" width="1" height="15" fill="#d7d7d7"/><rect x="234" y="424" width="1" height="15" fill="#d7d7d7"/><rect x="234" y="469" width="1" height="15" fill="#d7d7d7"/><rect x="234" y="484" width="1" height="15" fill="#d7d7d7"/><rect x="234" y="499" width="1" height="15" fill="#d7d7d7"/><rect x="234" y="514" width="1" height="15" fill="#d7d7d7"/><rect x="234" y="649" width="1" height="15" fill="#d7d7d7"/><rect x="234" y="664" width="1" height="15" fill="#d7d7d7"/><rect x="234" y="679" width="1" height="15" fill="#d7d7d7"/><rect x="234" y="694" width="1" height="15" fill="#d7d7d7"/><rect x="234" y="709" width="1" height="15" fill="#d7d7d7"/><rect x="234" y="724" width="1" height="15" fill="#d7d7d7"/><rect x="234" y="739" width="1" height="15" fill="#d7d7d7"/><rect x="234" y="754" width="1" height="15" fill="#d7d7d7"/><rect x="234" y="769" width="1" height="15" fill="#d7d7d7"/><rect x="234" y="784" width="1" height="15" fill="#d7d7d7"/><rect x="234" y="799" width="1" height="15" fill="#d7d7d7"/><rect x="234" y="814" width="1" height="15" fill="#d7d7d7"/><rect x="234" y="829" width="1" height="7" fill="#d7d7d7"/><rect x="287" y="199" width="1" height="15" fill="#d7d7d7"/><rect x="287" y="349" width="1" height="15" fill="#d7d7d7"/><rect x="287" y="364" width="1" height="15" fill="#d7d7d7"/><rect x="287" y="424" width="1" height="15" fill="#d7d7d7"/><rect x="287" y="469" width="1" height="15" fill="#d7d7d7"/><rect x="287" y="484" width="1" height="15" fill="#d7d7d7"/><rect x="287" y="499" width="1" height="15" fill="#d7d7d7"/><rect x="287" y="514" width="1" height="15" fill="#d7d7d7"/><rect x="287" y="649" width="1" height="15" fill="#d7d7d7"/><rect x="287" y="664" width="1" height="15" fill="#d7d7d7"/><rect x="287" y="679" width="1" height="15" fill="#d7d7d7"/><rect x="287" y="694" width="1" height="15" fill="#d7d7d7"/><rect x="287" y="709" width="1" height="15" fill="#d7d7d7"/><rect x="287" y="724" width="1" height="15" fill="#d7d7d7"/><rect x="287" y="739" width="1" height="15" fill="#d7d7d7"/><rect x="287" y="754" width="1" height="15" fill="#d7d7d7"/><rect x="287" y="769" width="1" height="15" fill="#d7d7d7"/><rect x="287" y="784" width="1" height="15" fill="#d7d7d7"/><rect x="287" y="799" width="1" height="15" fill="#d7d7d7"/><rect x="287" y="814" width="1" height="15" fill="#d7d7d7"/><rect x="287" y="829" width="1" height="7" fill="#d7d7d7"/><rect x="340" y="199" width="1" height="15" fill="#d7d7d7"/><rect x="340" y="349" width="1" height="15" fill="#d7d7d7"/><rect x="340" y="364" width="1" height="15" fill="#d7d7d7"/><rect x="340" y="424" width="1" height="15" fill="#d7d7d7"/><rect x="340" y="469" width="1" height="15" fill="#d7d7d7"/><rect x="340" y="484" width="1" height="15" fill="#d7d7d7"/><rect x="340" y="499" width="1" height="15" fill="#d7d7d7"/><rect x="340" y="514" width="1" height="15" fill="#d7d7d7"/><rect x="340" y="634" width="1" height="15" fill="#d7d7d7"/><rect x="340" y="649" width="1" height="15" fill="#d7d7d7"/><rect x="340" y="664" width="1" height="15" fill="#d7d7d7"/><rect x="340" y="679" width="1" height="15" fill="#d7d7d7"/><rect x="340" y="694" width="1" height="15" fill="#d7d7d7"/><rect x="340" y="709" width="1" height="15" fill="#d7d7d7"/><rect x="340" y="724" width="1" height="15" fill="#d7d7d7"/><rect x="340" y="739" width="1" height="15" fill="#d7d7d7"/><rect x="340" y="754" width="1" height="15" fill="#d7d7d7"/><rect x="340" y="769" width="1" height="15" fill="#d7d7d7"/><rect x="340" y="784" width="1" height="15" fill="#d7d7d7"/><rect x="340" y="799" width="1" height="15" fill="#d7d7d7"/><rect x="340" y="814" width="1" height="15" fill="#d7d7d7"/><rect x="340" y="829" width="1" height="7" fill="#d7d7d7"/><rect x="393" y="199" width="1" height="15" fill="#d7d7d7"/><rect x="393" y="349" width="1" height="15" fill="#d7d7d7"/><rect x="393" y="364" width="1" height="15" fill="#d7d7d7"/><rect x="393" y="394" width="1" height="15" fill="#d7d7d7"/><rect x="393" y="424" width="1" height="15" fill="#d7d7d7"/><rect x="393" y="469" width="1" height="15" fill="#d7d7d7"/><rect x="393" y="484" width="1" height="15" fill="#d7d7d7"/><rect x="393" y="499" width="1" height="15" fill="#d7d7d7"/><rect x="393" y="514" width="1" height="15" fill="#d7d7d7"/><rect x="393" y="544" width="1" height="15" fill="#d7d7d7"/><rect x="393" y="634" width="1" height="15" fill="#d7d7d7"/><rect x="393" y="649" width="1" height="15" fill="#d7d7d7"/><rect x="393" y="664" width="1" height="15" fill="#d7d7d7"/><rect x="393" y="679" width="1" height="15" fill="#d7d7d7"/><rect x="393" y="694" width="1" height="15" fill="#d7d7d7"/><rect x="393" y="709" width="1" height="15" fill="#d7d7d7"/><rect x="393" y="724" width="1" height="15" fill="#d7d7d7"/><rect x="393" y="739" width="1" height="15" fill="#d7d7d7"/><rect x="393" y="754" width="1" height="15" fill="#d7d7d7"/><rect x="393" y="769" width="1" height="15" fill="#d7d7d7"/><rect x="393" y="784" width="1" height="15" fill="#d7d7d7"/><rect x="393" y="799" width="1" height="15" fill="#d7d7d7"/><rect x="393" y="814" width="1" height="15" fill="#d7d7d7"/><rect x="393" y="829" width="1" height="7" fill="#d7d7d7"/><rect x="446" y="199" width="1" height="15" fill="#d7d7d7"/><rect x="446" y="349" width="1" height="15" fill="#d7d7d7"/><rect x="446" y="364" width="1" height="15" fill="#d7d7d7"/><rect x="446" y="394" width="1" height="15" fill="#d7d7d7"/><rect x="446" y="424" width="1" height="15" fill="#d7d7d7"/><rect x="446" y="469" width="1" height="15" fill="#d7d7d7"/><rect x="446" y="484" width="1" height="15" fill="#d7d7d7"/><rect x="446" y="499" width="1" height="15" fill="#d7d7d7"/><rect x="446" y="514" width="1" height="15" fill="#d7d7d7"/><rect x="446" y="544" width="1" height="15" fill="#d7d7d7"/><rect x="446" y="634" width="1" height="15" fill="#d7d7d7"/><rect x="446" y="649" width="1" height="15" fill="#d7d7d7"/><rect x="446" y="664" width="1" height="15" fill="#d7d7d7"/><rect x="446" y="679" width="1" height="15" fill="#d7d7d7"/><rect x="446" y="694" width="1" height="15" fill="#d7d7d7"/><rect x="446" y="709" width="1" height="15" fill="#d7d7d7"/><rect x="446" y="724" width="1" height="15" fill="#d7d7d7"/><rect x="446" y="739" width="1" height="15" fill="#d7d7d7"/><rect x="446" y="754" width="1" height="15" fill="#d7d7d7"/><rect x="446" y="769" width="1" height="15" fill="#d7d7d7"/><rect x="446" y="784" width="1" height="15" fill="#d7d7d7"/><rect x="446" y="799" width="1" height="15" fill="#d7d7d7"/><rect x="446" y="814" width="1" height="15" fill="#d7d7d7"/><rect x="446" y="829" width="1" height="7" fill="#d7d7d7"/><rect x="499" y="199" width="1" height="15" fill="#d7d7d7"/><rect x="499" y="349" width="1" height="15" fill="#d7d7d7"/><rect x="499" y="364" width="1" height="15" fill="#d7d7d7"/><rect x="499" y="394" width="1" height="15" fill="#d7d7d7"/><rect x="499" y="424" width="1" height="15" fill="#d7d7d7"/><rect x="499" y="469" width="1" height="15" fill="#d7d7d7"/><rect x="499" y="484" width="1" height="15" fill="#d7d7d7"/><rect x="499" y="499" width="1" height="15" fill="#d7d7d7"/><rect x="499" y="514" width="1" height="15" fill="#d7d7d7"/><rect x="499" y="544" width="1" height="15" fill="#d7d7d7"/><rect x="499" y="634" width="1" height="15" fill="#d7d7d7"/><rect x="499" y="649" width="1" height="15" fill="#d7d7d7"/><rect x="499" y="664" width="1" height="15" fill="#d7d7d7"/><rect x="499" y="679" width="1" height="15" fill="#d7d7d7"/><rect x="499" y="694" width="1" height="15" fill="#d7d7d7"/><rect x="499" y="709" width="1" height="15" fill="#d7d7d7"/><rect x="499" y="724" width="1" height="15" fill="#d7d7d7"/><rect x="499" y="739" width="1" height="15" fill="#d7d7d7"/><rect x="499" y="754" width="1" height="15" fill="#d7d7d7"/><rect x="499" y="769" width="1" height="15" fill="#d7d7d7"/><rect x="499" y="784" width="1" height="15" fill="#d7d7d7"/><rect x="499" y="799" width="1" height="15" fill="#d7d7d7"/><rect x="499" y="814" width="1" height="15" fill="#d7d7d7"/><rect x="499" y="829" width="1" height="7" fill="#d7d7d7"/><rect x="581" y="184" width="1" height="15" fill="#d7d7d7"/><rect x="581" y="199" width="1" height="15" fill="#d7d7d7"/><rect x="581" y="214" width="1" height="15" fill="#d7d7d7"/><rect x="581" y="229" width="1" height="15" fill="#d7d7d7"/><rect x="581" y="349" width="1" height="15" fill="#d7d7d7"/><rect x="581" y="364" width="1" height="15" fill="#d7d7d7"/><rect x="581" y="394" width="1" height="15" fill="#d7d7d7"/><rect x="581" y="424" width="1" height="15" fill="#d7d7d7"/><rect x="581" y="469" width="1" height="15" fill="#d7d7d7"/><rect x="581" y="484" width="1" height="15" fill="#d7d7d7"/><rect x="581" y="499" width="1" height="15" fill="#d7d7d7"/><rect x="581" y="514" width="1" height="15" fill="#d7d7d7"/><rect x="581" y="544" width="1" height="15" fill="#d7d7d7"/><rect x="581" y="634" width="1" height="15" fill="#d7d7d7"/><rect x="581" y="649" width="1" height="15" fill="#d7d7d7"/><rect x="581" y="664" width="1" height="15" fill="#d7d7d7"/><rect x="581" y="679" width="1" height="15" fill="#d7d7d7"/><rect x="581" y="694" width="1" height="15" fill="#d7d7d7"/><rect x="581" y="709" width="1" height="15" fill="#d7d7d7"/><rect x="581" y="724" width="1" height="15" fill="#d7d7d7"/><rect x="581" y="739" width="1" height="15" fill="#d7d7d7"/><rect x="581" y="754" width="1" height="15" fill="#d7d7d7"/><rect x="581" y="769" width="1" height="15" fill="#d7d7d7"/><rect x="581" y="784" width="1" height="15" fill="#d7d7d7"/><rect x="581" y="799" width="1" height="15" fill="#d7d7d7"/><rect x="581" y="814" width="1" height="15" fill="#d7d7d7"/><rect x="581" y="829" width="1" height="7" fill="#d7d7d7"/><rect x="683" y="184" width="1" height="15" fill="#d7d7d7"/><rect x="683" y="199" width="1" height="15" fill="#d7d7d7"/><rect x="683" y="214" width="1" height="15" fill="#d7d7d7"/><rect x="683" y="229" width="1" height="15" fill="#d7d7d7"/><rect x="683" y="244" width="1" height="15" fill="#d7d7d7"/><rect x="683" y="259" width="1" height="15" fill="#d7d7d7"/><rect x="683" y="274" width="1" height="15" fill="#d7d7d7"/><rect x="683" y="304" width="1" height="15" fill="#d7d7d7"/><rect x="683" y="319" width="1" height="15" fill="#d7d7d7"/><rect x="683" y="349" width="1" height="15" fill="#d7d7d7"/><rect x="683" y="364" width="1" height="15" fill="#d7d7d7"/><rect x="683" y="394" width="1" height="15" fill="#d7d7d7"/><rect x="683" y="424" width="1" height="15" fill="#d7d7d7"/><rect x="683" y="439" width="1" height="15" fill="#d7d7d7"/><rect x="683" y="454" width="1" height="15" fill="#d7d7d7"/><rect x="683" y="469" width="1" height="15" fill="#d7d7d7"/><rect x="683" y="484" width="1" height="15" fill="#d7d7d7"/><rect x="683" y="499" width="1" height="15" fill="#d7d7d7"/><rect x="683" y="514" width="1" height="15" fill="#d7d7d7"/><rect x="683" y="529" width="1" height="15" fill="#d7d7d7"/><rect x="683" y="544" width="1" height="15" fill="#d7d7d7"/><rect x="683" y="574" width="1" height="15" fill="#d7d7d7"/><rect x="683" y="604" width="1" height="15" fill="#d7d7d7"/><rect x="683" y="634" width="1" height="15" fill="#d7d7d7"/><rect x="683" y="649" width="1" height="15" fill="#d7d7d7"/><rect x="683" y="664" width="1" height="15" fill="#d7d7d7"/><rect x="683" y="679" width="1" height="15" fill="#d7d7d7"/><rect x="683" y="694" width="1" height="15" fill="#d7d7d7"/><rect x="683" y="709" width="1" height="15" fill="#d7d7d7"/><rect x="683" y="724" width="1" height="15" fill="#d7d7d7"/><rect x="683" y="739" width="1" height="15" fill="#d7d7d7"/><rect x="683" y="754" width="1" height="15" fill="#d7d7d7"/><rect x="683" y="769" width="1" height="15" fill="#d7d7d7"/><rect x="683" y="784" width="1" height="15" fill="#d7d7d7"/><rect x="683" y="799" width="1" height="15" fill="#d7d7d7"/><rect x="683" y="814" width="1" height="15" fill="#d7d7d7"/><rect x="683" y="829" width="1" height="7" fill="#d7d7d7"/><rect x="791" y="184" width="1" height="15" fill="#d7d7d7"/><rect x="791" y="199" width="1" height="15" fill="#d7d7d7"/><rect x="791" y="214" width="1" height="15" fill="#d7d7d7"/><rect x="791" y="229" width="1" height="15" fill="#d7d7d7"/><rect x="791" y="244" width="1" height="15" fill="#d7d7d7"/><rect x="791" y="259" width="1" height="15" fill="#d7d7d7"/><rect x="791" y="274" width="1" height="15" fill="#d7d7d7"/><rect x="791" y="289" width="1" height="15" fill="#d7d7d7"/><rect x="791" y="304" width="1" height="15" fill="#d7d7d7"/><rect x="791" y="319" width="1" height="15" fill="#d7d7d7"/><rect x="791" y="334" width="1" height="15" fill="#d7d7d7"/><rect x="791" y="349" width="1" height="15" fill="#d7d7d7"/><rect x="791" y="364" width="1" height="15" fill="#d7d7d7"/><rect x="791" y="379" width="1" height="15" fill="#d7d7d7"/><rect x="791" y="394" width="1" height="15" fill="#d7d7d7"/><rect x="791" y="409" width="1" height="15" fill="#d7d7d7"/><rect x="791" y="424" width="1" height="15" fill="#d7d7d7"/><rect x="791" y="439" width="1" height="15" fill="#d7d7d7"/><rect x="791" y="454" width="1" height="15" fill="#d7d7d7"/><rect x="791" y="469" width="1" height="15" fill="#d7d7d7"/><rect x="791" y="484" width="1" height="15" fill="#d7d7d7"/><rect x="791" y="499" width="1" height="15" fill="#d7d7d7"/><rect x="791" y="514" width="1" height="15" fill="#d7d7d7"/><rect x="791" y="529" width="1" height="15" fill="#d7d7d7"/><rect x="791" y="544" width="1" height="15" fill="#d7d7d7"/><rect x="791" y="559" width="1" height="15" fill="#d7d7d7"/><rect x="791" y="574" width="1" height="15" fill="#d7d7d7"/><rect x="791" y="589" width="1" height="15" fill="#d7d7d7"/><rect x="791" y="604" width="1" height="15" fill="#d7d7d7"/><rect x="791" y="619" width="1" height="15" fill="#d7d7d7"/><rect x="791" y="634" width="1" height="15" fill="#d7d7d7"/><rect x="791" y="649" width="1" height="15" fill="#d7d7d7"/><rect x="791" y="664" width="1" height="15" fill="#d7d7d7"/><rect x="791" y="679" width="1" height="15" fill="#d7d7d7"/><rect x="791" y="694" width="1" height="15" fill="#d7d7d7"/><rect x="791" y="709" width="1" height="15" fill="#d7d7d7"/><rect x="791" y="724" width="1" height="15" fill="#d7d7d7"/><rect x="791" y="739" width="1" height="15" fill="#d7d7d7"/><rect x="791" y="754" width="1" height="15" fill="#d7d7d7"/><rect x="791" y="769" width="1" height="15" fill="#d7d7d7"/><rect x="791" y="784" width="1" height="15" fill="#d7d7d7"/><rect x="791" y="799" width="1" height="15" fill="#d7d7d7"/><rect x="791" y="814" width="1" height="15" fill="#d7d7d7"/><rect x="791" y="829" width="1" height="7" fill="#d7d7d7"/><rect x="897" y="184" width="1" height="15" fill="#d7d7d7"/><rect x="897" y="199" width="1" height="15" fill="#d7d7d7"/><rect x="897" y="214" width="1" height="15" fill="#d7d7d7"/><rect x="897" y="229" width="1" height="15" fill="#d7d7d7"/><rect x="897" y="244" width="1" height="15" fill="#d7d7d7"/><rect x="897" y="259" width="1" height="15" fill="#d7d7d7"/><rect x="897" y="274" width="1" height="15" fill="#d7d7d7"/><rect x="897" y="289" width="1" height="15" fill="#d7d7d7"/><rect x="897" y="304" width="1" height="15" fill="#d7d7d7"/><rect x="897" y="319" width="1" height="15" fill="#d7d7d7"/><rect x="897" y="334" width="1" height="15" fill="#d7d7d7"/><rect x="897" y="349" width="1" height="15" fill="#d7d7d7"/><rect x="897" y="364" width="1" height="15" fill="#d7d7d7"/><rect x="897" y="379" width="1" height="15" fill="#d7d7d7"/><rect x="897" y="394" width="1" height="15" fill="#d7d7d7"/><rect x="897" y="409" width="1" height="15" fill="#d7d7d7"/><rect x="897" y="424" width="1" height="15" fill="#d7d7d7"/><rect x="897" y="439" width="1" height="15" fill="#d7d7d7"/><rect x="897" y="454" width="1" height="15" fill="#d7d7d7"/><rect x="897" y="469" width="1" height="15" fill="#d7d7d7"/><rect x="897" y="484" width="1" height="15" fill="#d7d7d7"/><rect x="897" y="499" width="1" height="15" fill="#d7d7d7"/><rect x="897" y="514" width="1" height="15" fill="#d7d7d7"/><rect x="897" y="529" width="1" height="15" fill="#d7d7d7"/><rect x="897" y="544" width="1" height="15" fill="#d7d7d7"/><rect x="897" y="559" width="1" height="15" fill="#d7d7d7"/><rect x="897" y="574" width="1" height="15" fill="#d7d7d7"/><rect x="897" y="589" width="1" height="15" fill="#d7d7d7"/><rect x="897" y="604" width="1" height="15" fill="#d7d7d7"/><rect x="897" y="619" width="1" height="15" fill="#d7d7d7"/><rect x="897" y="634" width="1" height="15" fill="#d7d7d7"/><rect x="897" y="649" width="1" height="15" fill="#d7d7d7"/><rect x="897" y="664" width="1" height="15" fill="#d7d7d7"/><rect x="897" y="679" width="1" height="15" fill="#d7d7d7"/><rect x="897" y="694" width="1" height="15" fill="#d7d7d7"/><rect x="897" y="709" width="1" height="15" fill="#d7d7d7"/><rect x="897" y="724" width="1" height="15" fill="#d7d7d7"/><rect x="897" y="739" width="1" height="15" fill="#d7d7d7"/><rect x="897" y="754" width="1" height="15" fill="#d7d7d7"/><rect x="897" y="769" width="1" height="15" fill="#d7d7d7"/><rect x="897" y="784" width="1" height="15" fill="#d7d7d7"/><rect x="897" y="799" width="1" height="15" fill="#d7d7d7"/><rect x="897" y="814" width="1" height="15" fill="#d7d7d7"/><rect x="897" y="829" width="1" height="7" fill="#d7d7d7"/><rect x="952" y="184" width="1" height="15" fill="#d7d7d7"/><rect x="952" y="199" width="1" height="15" fill="#d7d7d7"/><rect x="952" y="214" width="1" height="15" fill="#d7d7d7"/><rect x="952" y="229" width="1" height="15" fill="#d7d7d7"/><rect x="952" y="244" width="1" height="15" fill="#d7d7d7"/><rect x="952" y="259" width="1" height="15" fill="#d7d7d7"/><rect x="952" y="274" width="1" height="15" fill="#d7d7d7"/><rect x="952" y="289" width="1" height="15" fill="#d7d7d7"/><rect x="952" y="304" width="1" height="15" fill="#d7d7d7"/><rect x="952" y="319" width="1" height="15" fill="#d7d7d7"/><rect x="952" y="334" width="1" height="15" fill="#d7d7d7"/><rect x="952" y="349" width="1" height="15" fill="#d7d7d7"/><rect x="952" y="364" width="1" height="15" fill="#d7d7d7"/><rect x="952" y="379" width="1" height="15" fill="#d7d7d7"/><rect x="952" y="394" width="1" height="15" fill="#d7d7d7"/><rect x="952" y="409" width="1" height="15" fill="#d7d7d7"/><rect x="952" y="424" width="1" height="15" fill="#d7d7d7"/><rect x="952" y="439" width="1" height="15" fill="#d7d7d7"/><rect x="952" y="454" width="1" height="15" fill="#d7d7d7"/><rect x="952" y="469" width="1" height="15" fill="#d7d7d7"/><rect x="952" y="484" width="1" height="15" fill="#d7d7d7"/><rect x="952" y="499" width="1" height="15" fill="#d7d7d7"/><rect x="952" y="514" width="1" height="15" fill="#d7d7d7"/><rect x="952" y="529" width="1" height="15" fill="#d7d7d7"/><rect x="952" y="544" width="1" height="15" fill="#d7d7d7"/><rect x="952" y="559" width="1" height="15" fill="#d7d7d7"/><rect x="952" y="574" width="1" height="15" fill="#d7d7d7"/><rect x="952" y="589" width="1" height="15" fill="#d7d7d7"/><rect x="952" y="604" width="1" height="15" fill="#d7d7d7"/><rect x="952" y="619" width="1" height="15" fill="#d7d7d7"/><rect x="952" y="664" width="1" height="15" fill="#d7d7d7"/><rect x="952" y="679" width="1" height="15" fill="#d7d7d7"/><rect x="952" y="694" width="1" height="15" fill="#d7d7d7"/><rect x="952" y="709" width="1" height="15" fill="#d7d7d7"/><rect x="952" y="724" width="1" height="15" fill="#d7d7d7"/><rect x="952" y="739" width="1" height="15" fill="#d7d7d7"/><rect x="952" y="754" width="1" height="15" fill="#d7d7d7"/><rect x="952" y="769" width="1" height="15" fill="#d7d7d7"/><rect x="952" y="784" width="1" height="15" fill="#d7d7d7"/><rect x="952" y="799" width="1" height="15" fill="#d7d7d7"/><rect x="952" y="814" width="1" height="15" fill="#d7d7d7"/><rect x="952" y="829" width="1" height="7" fill="#d7d7d7"/><rect x="1027" y="184" width="1" height="15" fill="#d7d7d7"/><rect x="1027" y="199" width="1" height="15" fill="#d7d7d7"/><rect x="1027" y="214" width="1" height="15" fill="#d7d7d7"/><rect x="1027" y="229" width="1" height="15" fill="#d7d7d7"/><rect x="1027" y="244" width="1" height="15" fill="#d7d7d7"/><rect x="1027" y="259" width="1" height="15" fill="#d7d7d7"/><rect x="1027" y="274" width="1" height="15" fill="#d7d7d7"/><rect x="1027" y="289" width="1" height="15" fill="#d7d7d7"/><rect x="1027" y="304" width="1" height="15" fill="#d7d7d7"/><rect x="1027" y="319" width="1" height="15" fill="#d7d7d7"/><rect x="1027" y="334" width="1" height="15" fill="#d7d7d7"/><rect x="1027" y="349" width="1" height="15" fill="#d7d7d7"/><rect x="1027" y="364" width="1" height="15" fill="#d7d7d7"/><rect x="1027" y="379" width="1" height="15" fill="#d7d7d7"/><rect x="1027" y="394" width="1" height="15" fill="#d7d7d7"/><rect x="1027" y="409" width="1" height="15" fill="#d7d7d7"/><rect x="1027" y="424" width="1" height="15" fill="#d7d7d7"/><rect x="1027" y="439" width="1" height="15" fill="#d7d7d7"/><rect x="1027" y="454" width="1" height="15" fill="#d7d7d7"/><rect x="1027" y="469" width="1" height="15" fill="#d7d7d7"/><rect x="1027" y="484" width="1" height="15" fill="#d7d7d7"/><rect x="1027" y="499" width="1" height="15" fill="#d7d7d7"/><rect x="1027" y="514" width="1" height="15" fill="#d7d7d7"/><rect x="1027" y="529" width="1" height="15" fill="#d7d7d7"/><rect x="1027" y="544" width="1" height="15" fill="#d7d7d7"/><rect x="1027" y="559" width="1" height="15" fill="#d7d7d7"/><rect x="1027" y="574" width="1" height="15" fill="#d7d7d7"/><rect x="1027" y="589" width="1" height="15" fill="#d7d7d7"/><rect x="1027" y="604" width="1" height="15" fill="#d7d7d7"/><rect x="1027" y="619" width="1" height="15" fill="#d7d7d7"/><rect x="1027" y="634" width="1" height="15" fill="#d7d7d7"/><rect x="1027" y="649" width="1" height="15" fill="#d7d7d7"/><rect x="1027" y="664" width="1" height="15" fill="#d7d7d7"/><rect x="1027" y="679" width="1" height="15" fill="#d7d7d7"/><rect x="1027" y="694" width="1" height="15" fill="#d7d7d7"/><rect x="1027" y="709" width="1" height="15" fill="#d7d7d7"/><rect x="1027" y="724" width="1" height="15" fill="#d7d7d7"/><rect x="1027" y="739" width="1" height="15" fill="#d7d7d7"/><rect x="1027" y="754" width="1" height="15" fill="#d7d7d7"/><rect x="1027" y="769" width="1" height="15" fill="#d7d7d7"/><rect x="1027" y="784" width="1" height="15" fill="#d7d7d7"/><rect x="1027" y="799" width="1" height="15" fill="#d7d7d7"/><rect x="1027" y="814" width="1" height="15" fill="#d7d7d7"/><rect x="1027" y="829" width="1" height="7" fill="#d7d7d7"/><rect x="1097" y="184" width="1" height="15" fill="#d7d7d7"/><rect x="1097" y="199" width="1" height="15" fill="#d7d7d7"/><rect x="1097" y="214" width="1" height="15" fill="#d7d7d7"/><rect x="1097" y="229" width="1" height="15" fill="#d7d7d7"/><rect x="1097" y="244" width="1" height="15" fill="#d7d7d7"/><rect x="1097" y="259" width="1" height="15" fill="#d7d7d7"/><rect x="1097" y="274" width="1" height="15" fill="#d7d7d7"/><rect x="1097" y="289" width="1" height="15" fill="#d7d7d7"/><rect x="1097" y="304" width="1" height="15" fill="#d7d7d7"/><rect x="1097" y="319" width="1" height="15" fill="#d7d7d7"/><rect x="1097" y="334" width="1" height="15" fill="#d7d7d7"/><rect x="1097" y="349" width="1" height="15" fill="#d7d7d7"/><rect x="1097" y="364" width="1" height="15" fill="#d7d7d7"/><rect x="1097" y="379" width="1" height="15" fill="#d7d7d7"/><rect x="1097" y="394" width="1" height="15" fill="#d7d7d7"/><rect x="1097" y="409" width="1" height="15" fill="#d7d7d7"/><rect x="1097" y="424" width="1" height="15" fill="#d7d7d7"/><rect x="1097" y="439" width="1" height="15" fill="#d7d7d7"/><rect x="1097" y="454" width="1" height="15" fill="#d7d7d7"/><rect x="1097" y="469" width="1" height="15" fill="#d7d7d7"/><rect x="1097" y="484" width="1" height="15" fill="#d7d7d7"/><rect x="1097" y="499" width="1" height="15" fill="#d7d7d7"/><rect x="1097" y="514" width="1" height="15" fill="#d7d7d7"/><rect x="1097" y="529" width="1" height="15" fill="#d7d7d7"/><rect x="1097" y="544" width="1" height="15" fill="#d7d7d7"/><rect x="1097" y="559" width="1" height="15" fill="#d7d7d7"/><rect x="1097" y="574" width="1" height="15" fill="#d7d7d7"/><rect x="1097" y="589" width="1" height="15" fill="#d7d7d7"/><rect x="1097" y="604" width="1" height="15" fill="#d7d7d7"/><rect x="1097" y="619" width="1" height="15" fill="#d7d7d7"/><rect x="1097" y="634" width="1" height="15" fill="#d7d7d7"/><rect x="1097" y="649" width="1" height="15" fill="#d7d7d7"/><rect x="1097" y="664" width="1" height="15" fill="#d7d7d7"/><rect x="1097" y="679" width="1" height="15" fill="#d7d7d7"/><rect x="1097" y="694" width="1" height="15" fill="#d7d7d7"/><rect x="1097" y="709" width="1" height="15" fill="#d7d7d7"/><rect x="1097" y="724" width="1" height="15" fill="#d7d7d7"/><rect x="1097" y="739" width="1" height="15" fill="#d7d7d7"/><rect x="1097" y="754" width="1" height="15" fill="#d7d7d7"/><rect x="1097" y="769" width="1" height="15" fill="#d7d7d7"/><rect x="1097" y="784" width="1" height="15" fill="#d7d7d7"/><rect x="1097" y="799" width="1" height="15" fill="#d7d7d7"/><rect x="1097" y="814" width="1" height="15" fill="#d7d7d7"/><rect x="1097" y="829" width="1" height="7" fill="#d7d7d7"/><rect x="1162" y="184" width="1" height="15" fill="#d7d7d7"/><rect x="1162" y="199" width="1" height="15" fill="#d7d7d7"/><rect x="1162" y="214" width="1" height="15" fill="#d7d7d7"/><rect x="1162" y="229" width="1" height="15" fill="#d7d7d7"/><rect x="1162" y="244" width="1" height="15" fill="#d7d7d7"/><rect x="1162" y="259" width="1" height="15" fill="#d7d7d7"/><rect x="1162" y="274" width="1" height="15" fill="#d7d7d7"/><rect x="1162" y="289" width="1" height="15" fill="#d7d7d7"/><rect x="1162" y="304" width="1" height="15" fill="#d7d7d7"/><rect x="1162" y="319" width="1" height="15" fill="#d7d7d7"/><rect x="1162" y="334" width="1" height="15" fill="#d7d7d7"/><rect x="1162" y="349" width="1" height="15" fill="#d7d7d7"/><rect x="1162" y="364" width="1" height="15" fill="#d7d7d7"/><rect x="1162" y="379" width="1" height="15" fill="#d7d7d7"/><rect x="1162" y="394" width="1" height="15" fill="#d7d7d7"/><rect x="1162" y="409" width="1" height="15" fill="#d7d7d7"/><rect x="1162" y="424" width="1" height="15" fill="#d7d7d7"/><rect x="1162" y="439" width="1" height="15" fill="#d7d7d7"/><rect x="1162" y="454" width="1" height="15" fill="#d7d7d7"/><rect x="1162" y="469" width="1" height="15" fill="#d7d7d7"/><rect x="1162" y="484" width="1" height="15" fill="#d7d7d7"/><rect x="1162" y="499" width="1" height="15" fill="#d7d7d7"/><rect x="1162" y="514" width="1" height="15" fill="#d7d7d7"/><rect x="1162" y="529" width="1" height="15" fill="#d7d7d7"/><rect x="1162" y="544" width="1" height="15" fill="#d7d7d7"/><rect x="1162" y="559" width="1" height="15" fill="#d7d7d7"/><rect x="1162" y="574" width="1" height="15" fill="#d7d7d7"/><rect x="1162" y="589" width="1" height="15" fill="#d7d7d7"/><rect x="1162" y="604" width="1" height="15" fill="#d7d7d7"/><rect x="1162" y="619" width="1" height="15" fill="#d7d7d7"/><rect x="1162" y="634" width="1" height="15" fill="#d7d7d7"/><rect x="1162" y="649" width="1" height="15" fill="#d7d7d7"/><rect x="1162" y="664" width="1" height="15" fill="#d7d7d7"/><rect x="1162" y="679" width="1" height="15" fill="#d7d7d7"/><rect x="1162" y="694" width="1" height="15" fill="#d7d7d7"/><rect x="1162" y="709" width="1" height="15" fill="#d7d7d7"/><rect x="1162" y="724" width="1" height="15" fill="#d7d7d7"/><rect x="1162" y="739" width="1" height="15" fill="#d7d7d7"/><rect x="1162" y="754" width="1" height="15" fill="#d7d7d7"/><rect x="1162" y="769" width="1" height="15" fill="#d7d7d7"/><rect x="1162" y="784" width="1" height="15" fill="#d7d7d7"/><rect x="1162" y="799" width="1" height="15" fill="#d7d7d7"/><rect x="1162" y="814" width="1" height="15" fill="#d7d7d7"/><rect x="1162" y="829" width="1" height="7" fill="#d7d7d7"/><rect x="1215" y="184" width="1" height="15" fill="#d7d7d7"/><rect x="1215" y="199" width="1" height="15" fill="#d7d7d7"/><rect x="1215" y="214" width="1" height="15" fill="#d7d7d7"/><rect x="1215" y="229" width="1" height="15" fill="#d7d7d7"/><rect x="1215" y="244" width="1" height="15" fill="#d7d7d7"/><rect x="1215" y="259" width="1" height="15" fill="#d7d7d7"/><rect x="1215" y="274" width="1" height="15" fill="#d7d7d7"/><rect x="1215" y="289" width="1" height="15" fill="#d7d7d7"/><rect x="1215" y="304" width="1" height="15" fill="#d7d7d7"/><rect x="1215" y="319" width="1" height="15" fill="#d7d7d7"/><rect x="1215" y="334" width="1" height="15" fill="#d7d7d7"/><rect x="1215" y="349" width="1" height="15" fill="#d7d7d7"/><rect x="1215" y="364" width="1" height="15" fill="#d7d7d7"/><rect x="1215" y="379" width="1" height="15" fill="#d7d7d7"/><rect x="1215" y="394" width="1" height="15" fill="#d7d7d7"/><rect x="1215" y="409" width="1" height="15" fill="#d7d7d7"/><rect x="1215" y="424" width="1" height="15" fill="#d7d7d7"/><rect x="1215" y="439" width="1" height="15" fill="#d7d7d7"/><rect x="1215" y="454" width="1" height="15" fill="#d7d7d7"/><rect x="1215" y="469" width="1" height="15" fill="#d7d7d7"/><rect x="1215" y="484" width="1" height="15" fill="#d7d7d7"/><rect x="1215" y="499" width="1" height="15" fill="#d7d7d7"/><rect x="1215" y="514" width="1" height="15" fill="#d7d7d7"/><rect x="1215" y="529" width="1" height="15" fill="#d7d7d7"/><rect x="1215" y="544" width="1" height="15" fill="#d7d7d7"/><rect x="1215" y="559" width="1" height="15" fill="#d7d7d7"/><rect x="1215" y="574" width="1" height="15" fill="#d7d7d7"/><rect x="1215" y="589" width="1" height="15" fill="#d7d7d7"/><rect x="1215" y="604" width="1" height="15" fill="#d7d7d7"/><rect x="1215" y="619" width="1" height="15" fill="#d7d7d7"/><rect x="1215" y="634" width="1" height="15" fill="#d7d7d7"/><rect x="1215" y="649" width="1" height="15" fill="#d7d7d7"/><rect x="1215" y="664" width="1" height="15" fill="#d7d7d7"/><rect x="1215" y="679" width="1" height="15" fill="#d7d7d7"/><rect x="1215" y="694" width="1" height="15" fill="#d7d7d7"/><rect x="1215" y="709" width="1" height="15" fill="#d7d7d7"/><rect x="1215" y="724" width="1" height="15" fill="#d7d7d7"/><rect x="1215" y="739" width="1" height="15" fill="#d7d7d7"/><rect x="1215" y="754" width="1" height="15" fill="#d7d7d7"/><rect x="1215" y="769" width="1" height="15" fill="#d7d7d7"/><rect x="1215" y="784" width="1" height="15" fill="#d7d7d7"/><rect x="1215" y="799" width="1" height="15" fill="#d7d7d7"/><rect x="1215" y="814" width="1" height="15" fill="#d7d7d7"/><rect x="1215" y="829" width="1" height="7" fill="#d7d7d7"/><rect x="1268" y="184" width="1" height="15" fill="#d7d7d7"/><rect x="1268" y="199" width="1" height="15" fill="#d7d7d7"/><rect x="1268" y="214" width="1" height="15" fill="#d7d7d7"/><rect x="1268" y="229" width="1" height="15" fill="#d7d7d7"/><rect x="1268" y="244" width="1" height="15" fill="#d7d7d7"/><rect x="1268" y="259" width="1" height="15" fill="#d7d7d7"/><rect x="1268" y="274" width="1" height="15" fill="#d7d7d7"/><rect x="1268" y="289" width="1" height="15" fill="#d7d7d7"/><rect x="1268" y="304" width="1" height="15" fill="#d7d7d7"/><rect x="1268" y="319" width="1" height="15" fill="#d7d7d7"/><rect x="1268" y="334" width="1" height="15" fill="#d7d7d7"/><rect x="1268" y="349" width="1" height="15" fill="#d7d7d7"/><rect x="1268" y="364" width="1" height="15" fill="#d7d7d7"/><rect x="1268" y="379" width="1" height="15" fill="#d7d7d7"/><rect x="1268" y="394" width="1" height="15" fill="#d7d7d7"/><rect x="1268" y="409" width="1" height="15" fill="#d7d7d7"/><rect x="1268" y="424" width="1" height="15" fill="#d7d7d7"/><rect x="1268" y="439" width="1" height="15" fill="#d7d7d7"/><rect x="1268" y="454" width="1" height="15" fill="#d7d7d7"/><rect x="1268" y="469" width="1" height="15" fill="#d7d7d7"/><rect x="1268" y="484" width="1" height="15" fill="#d7d7d7"/><rect x="1268" y="499" width="1" height="15" fill="#d7d7d7"/><rect x="1268" y="514" width="1" height="15" fill="#d7d7d7"/><rect x="1268" y="529" width="1" height="15" fill="#d7d7d7"/><rect x="1268" y="544" width="1" height="15" fill="#d7d7d7"/><rect x="1268" y="559" width="1" height="15" fill="#d7d7d7"/><rect x="1268" y="574" width="1" height="15" fill="#d7d7d7"/><rect x="1268" y="589" width="1" height="15" fill="#d7d7d7"/><rect x="1268" y="604" width="1" height="15" fill="#d7d7d7"/><rect x="1268" y="619" width="1" height="15" fill="#d7d7d7"/><rect x="1268" y="634" width="1" height="15" fill="#d7d7d7"/><rect x="1268" y="649" width="1" height="15" fill="#d7d7d7"/><rect x="1268" y="664" width="1" height="15" fill="#d7d7d7"/><rect x="1268" y="679" width="1" height="15" fill="#d7d7d7"/><rect x="1268" y="694" width="1" height="15" fill="#d7d7d7"/><rect x="1268" y="709" width="1" height="15" fill="#d7d7d7"/><rect x="1268" y="724" width="1" height="15" fill="#d7d7d7"/><rect x="1268" y="739" width="1" height="15" fill="#d7d7d7"/><rect x="1268" y="754" width="1" height="15" fill="#d7d7d7"/><rect x="1268" y="769" width="1" height="15" fill="#d7d7d7"/><rect x="1268" y="784" width="1" height="15" fill="#d7d7d7"/><rect x="1268" y="799" width="1" height="15" fill="#d7d7d7"/><rect x="1268" y="814" width="1" height="15" fill="#d7d7d7"/><rect x="1268" y="829" width="1" height="7" fill="#d7d7d7"/><rect x="1321" y="184" width="1" height="15" fill="#d7d7d7"/><rect x="1321" y="199" width="1" height="15" fill="#d7d7d7"/><rect x="1321" y="214" width="1" height="15" fill="#d7d7d7"/><rect x="1321" y="229" width="1" height="15" fill="#d7d7d7"/><rect x="1321" y="244" width="1" height="15" fill="#d7d7d7"/><rect x="1321" y="259" width="1" height="15" fill="#d7d7d7"/><rect x="1321" y="274" width="1" height="15" fill="#d7d7d7"/><rect x="1321" y="289" width="1" height="15" fill="#d7d7d7"/><rect x="1321" y="304" width="1" height="15" fill="#d7d7d7"/><rect x="1321" y="319" width="1" height="15" fill="#d7d7d7"/><rect x="1321" y="334" width="1" height="15" fill="#d7d7d7"/><rect x="1321" y="349" width="1" height="15" fill="#d7d7d7"/><rect x="1321" y="364" width="1" height="15" fill="#d7d7d7"/><rect x="1321" y="379" width="1" height="15" fill="#d7d7d7"/><rect x="1321" y="394" width="1" height="15" fill="#d7d7d7"/><rect x="1321" y="409" width="1" height="15" fill="#d7d7d7"/><rect x="1321" y="424" width="1" height="15" fill="#d7d7d7"/><rect x="1321" y="439" width="1" height="15" fill="#d7d7d7"/><rect x="1321" y="454" width="1" height="15" fill="#d7d7d7"/><rect x="1321" y="469" width="1" height="15" fill="#d7d7d7"/><rect x="1321" y="484" width="1" height="15" fill="#d7d7d7"/><rect x="1321" y="499" width="1" height="15" fill="#d7d7d7"/><rect x="1321" y="514" width="1" height="15" fill="#d7d7d7"/><rect x="1321" y="529" width="1" height="15" fill="#d7d7d7"/><rect x="1321" y="544" width="1" height="15" fill="#d7d7d7"/><rect x="1321" y="559" width="1" height="15" fill="#d7d7d7"/><rect x="1321" y="574" width="1" height="15" fill="#d7d7d7"/><rect x="1321" y="589" width="1" height="15" fill="#d7d7d7"/><rect x="1321" y="604" width="1" height="15" fill="#d7d7d7"/><rect x="1321" y="619" width="1" height="15" fill="#d7d7d7"/><rect x="1321" y="634" width="1" height="15" fill="#d7d7d7"/><rect x="1321" y="649" width="1" height="15" fill="#d7d7d7"/><rect x="1321" y="664" width="1" height="15" fill="#d7d7d7"/><rect x="1321" y="679" width="1" height="15" fill="#d7d7d7"/><rect x="1321" y="694" width="1" height="15" fill="#d7d7d7"/><rect x="1321" y="709" width="1" height="15" fill="#d7d7d7"/><rect x="1321" y="724" width="1" height="15" fill="#d7d7d7"/><rect x="1321" y="739" width="1" height="15" fill="#d7d7d7"/><rect x="1321" y="754" width="1" height="15" fill="#d7d7d7"/><rect x="1321" y="769" width="1" height="15" fill="#d7d7d7"/><rect x="1321" y="784" width="1" height="15" fill="#d7d7d7"/><rect x="1321" y="799" width="1" height="15" fill="#d7d7d7"/><rect x="1321" y="814" width="1" height="15" fill="#d7d7d7"/><rect x="1321" y="829" width="1" height="7" fill="#d7d7d7"/><rect x="1374" y="184" width="1" height="15" fill="#d7d7d7"/><rect x="1374" y="199" width="1" height="15" fill="#d7d7d7"/><rect x="1374" y="214" width="1" height="15" fill="#d7d7d7"/><rect x="1374" y="229" width="1" height="15" fill="#d7d7d7"/><rect x="1374" y="244" width="1" height="15" fill="#d7d7d7"/><rect x="1374" y="259" width="1" height="15" fill="#d7d7d7"/><rect x="1374" y="274" width="1" height="15" fill="#d7d7d7"/><rect x="1374" y="289" width="1" height="15" fill="#d7d7d7"/><rect x="1374" y="304" width="1" height="15" fill="#d7d7d7"/><rect x="1374" y="319" width="1" height="15" fill="#d7d7d7"/><rect x="1374" y="334" width="1" height="15" fill="#d7d7d7"/><rect x="1374" y="349" width="1" height="15" fill="#d7d7d7"/><rect x="1374" y="364" width="1" height="15" fill="#d7d7d7"/><rect x="1374" y="379" width="1" height="15" fill="#d7d7d7"/><rect x="1374" y="394" width="1" height="15" fill="#d7d7d7"/><rect x="1374" y="409" width="1" height="15" fill="#d7d7d7"/><rect x="1374" y="424" width="1" height="15" fill="#d7d7d7"/><rect x="1374" y="439" width="1" height="15" fill="#d7d7d7"/><rect x="1374" y="454" width="1" height="15" fill="#d7d7d7"/><rect x="1374" y="469" width="1" height="15" fill="#d7d7d7"/><rect x="1374" y="484" width="1" height="15" fill="#d7d7d7"/><rect x="1374" y="499" width="1" height="15" fill="#d7d7d7"/><rect x="1374" y="514" width="1" height="15" fill="#d7d7d7"/><rect x="1374" y="529" width="1" height="15" fill="#d7d7d7"/><rect x="1374" y="544" width="1" height="15" fill="#d7d7d7"/><rect x="1374" y="559" width="1" height="15" fill="#d7d7d7"/><rect x="1374" y="574" width="1" height="15" fill="#d7d7d7"/><rect x="1374" y="589" width="1" height="15" fill="#d7d7d7"/><rect x="1374" y="604" width="1" height="15" fill="#d7d7d7"/><rect x="1374" y="619" width="1" height="15" fill="#d7d7d7"/><rect x="1374" y="634" width="1" height="15" fill="#d7d7d7"/><rect x="1374" y="649" width="1" height="15" fill="#d7d7d7"/><rect x="1374" y="664" width="1" height="15" fill="#d7d7d7"/><rect x="1374" y="679" width="1" height="15" fill="#d7d7d7"/><rect x="1374" y="694" width="1" height="15" fill="#d7d7d7"/><rect x="1374" y="709" width="1" height="15" fill="#d7d7d7"/><rect x="1374" y="724" width="1" height="15" fill="#d7d7d7"/><rect x="1374" y="739" width="1" height="15" fill="#d7d7d7"/><rect x="1374" y="754" width="1" height="15" fill="#d7d7d7"/><rect x="1374" y="769" width="1" height="15" fill="#d7d7d7"/><rect x="1374" y="784" width="1" height="15" fill="#d7d7d7"/><rect x="1374" y="799" width="1" height="15" fill="#d7d7d7"/><rect x="1374" y="814" width="1" height="15" fill="#d7d7d7"/><rect x="1374" y="829" width="1" height="7" fill="#d7d7d7"/></svg><svg class="a" style="left:0;top:0" width="1440" height="900" shape-rendering="crispEdges"><rect x="75" y="164" width="1" height="20" fill="#e1e1e1"/><rect x="128" y="164" width="1" height="20" fill="#e1e1e1"/><rect x="181" y="164" width="1" height="20" fill="#e1e1e1"/><rect x="234" y="164" width="1" height="20" fill="#e1e1e1"/><rect x="287" y="164" width="1" height="20" fill="#e1e1e1"/><rect x="340" y="164" width="1" height="20" fill="#e1e1e1"/><rect x="393" y="164" width="1" height="20" fill="#e1e1e1"/><rect x="446" y="164" width="1" height="20" fill="#e1e1e1"/><rect x="499" y="164" width="1" height="20" fill="#e1e1e1"/><rect x="581" y="164" width="1" height="20" fill="#e1e1e1"/><rect x="683" y="164" width="1" height="20" fill="#e1e1e1"/><rect x="791" y="164" width="1" height="20" fill="#e1e1e1"/><rect x="897" y="164" width="1" height="20" fill="#e1e1e1"/><rect x="952" y="164" width="1" height="20" fill="#e1e1e1"/><rect x="1027" y="164" width="1" height="20" fill="#e1e1e1"/><rect x="1097" y="164" width="1" height="20" fill="#e1e1e1"/><rect x="1162" y="164" width="1" height="20" fill="#e1e1e1"/><rect x="1215" y="164" width="1" height="20" fill="#e1e1e1"/><rect x="1268" y="164" width="1" height="20" fill="#e1e1e1"/><rect x="1321" y="164" width="1" height="20" fill="#e1e1e1"/><rect x="1374" y="164" width="1" height="20" fill="#e1e1e1"/><rect x="0" y="184" width="1425" height="1" fill="#c4c4c4"/><rect x="22" y="163" width="1" height="673" fill="#c4c4c4"/></svg><div class="a" style="left:1048px;top:616px;width:29px;height:1px;background:#000"></div><div class="a" style="left:1114px;top:616px;width:32px;height:1px;background:#000"></div>
<div class="t" style="left:634.00px;top:10.72px;line-height:18px;font-size:13.5px;font-weight:400;color:#f2f8f4;transform:scaleX(0.9947);-webkit-text-stroke:0.25px #f2f8f4">Excel Tutorial_Product Function</div><div class="t" style="left:1235.30px;top:12.07px;line-height:16px;font-size:12.5px;font-weight:400;color:#86bea0;transform:scaleX(1.0086);">Search Sheet</div><div class="t" style="left:22.60px;top:42.96px;line-height:17px;font-size:13.4px;font-weight:400;color:#127a45;transform:scaleX(0.9906);-webkit-text-stroke:0.3px #127a45">Home</div><div class="t" style="left:85.30px;top:42.96px;line-height:17px;font-size:13.4px;font-weight:400;color:#e3f1e8;transform:scaleX(1.0657);-webkit-text-stroke:0.35px #e3f1e8">Insert</div><div class="t" style="left:148.50px;top:42.96px;line-height:17px;font-size:13.4px;font-weight:400;color:#e3f1e8;transform:scaleX(0.9920);-webkit-text-stroke:0.35px #e3f1e8">Draw</div><div class="t" style="left:206.70px;top:42.96px;line-height:17px;font-size:13.4px;font-weight:400;color:#e3f1e8;transform:scaleX(1.0053);-webkit-text-stroke:0.35px #e3f1e8">Page Layout</div><div class="t" style="left:309.40px;top:42.96px;line-height:17px;font-size:13.4px;font-weight:400;color:#e3f1e8;transform:scaleX(1.0141);-webkit-text-stroke:0.35px #e3f1e8">Formulas</div><div class="t" style="left:393.40px;top:42.96px;line-height:17px;font-size:13.4px;font-weight:400;color:#e3f1e8;transform:scaleX(0.9966);-webkit-text-stroke:0.35px #e3f1e8">Data</div><div class="t" style="left:448.60px;top:42.96px;line-height:17px;font-size:13.4px;font-weight:400;color:#e3f1e8;transform:scaleX(0.9816);-webkit-text-stroke:0.35px #e3f1e8">Review</div><div class="t" style="left:518.60px;top:42.96px;line-height:17px;font-size:13.4px;font-weight:400;color:#e3f1e8;transform:scaleX(1.0209);-webkit-text-stroke:0.35px #e3f1e8">View</div><div class="t" style="left:1366.40px;top:42.86px;line-height:17px;font-size:13.4px;font-weight:700;color:#e3f1e8;transform:scaleX(0.9484);">Share</div><div class="t" style="left:10.50px;top:140.64px;line-height:16px;font-size:12px;font-weight:400;color:#1a1a1a;transform:scaleX(1.0924);">M22</div><div class="t" style="left:80.00px;top:853.44px;line-height:16px;font-size:12px;font-weight:700;color:#15834d;transform:scaleX(0.9909);">Sheet1</div><div class="t" style="left:24.00px;top:881.14px;line-height:16px;font-size:12px;font-weight:400;color:#5a5a5a;transform:scaleX(1.0090);">Ready</div><div class="t" style="left:1385.00px;top:881.04px;line-height:16px;font-size:12px;font-weight:400;color:#4a4a4a;transform:scaleX(1.0097);">100%</div><div class="t" style="left:18.60px;top:105.16px;line-height:14px;font-size:10.5px;font-weight:400;color:#1c1c1c;transform:scaleX(0.9941);-webkit-text-stroke:0.2px #1c1c1c">Paste</div><div class="t" style="left:87.00px;top:68.36px;line-height:14px;font-size:10.5px;font-weight:400;color:#1c1c1c;transform:scaleX(1.0402);-webkit-text-stroke:0.2px #1c1c1c">Cut</div><div class="t" style="left:87.00px;top:91.06px;line-height:14px;font-size:10.5px;font-weight:400;color:#1c1c1c;transform:scaleX(1.0198);-webkit-text-stroke:0.2px #1c1c1c">Copy</div><div class="t" style="left:87.00px;top:114.36px;line-height:14px;font-size:10.5px;font-weight:400;color:#1c1c1c;transform:scaleX(1.0521);-webkit-text-stroke:0.2px #1c1c1c">Format</div><div class="t" style="left:150.00px;top:74.87px;line-height:16px;font-size:12.5px;font-weight:400;color:#1c1c1c;transform:scaleX(1.0037);">Calibri (Body)</div><div class="t" style="left:259.00px;top:74.87px;line-height:16px;font-size:12.5px;font-weight:400;color:#1c1c1c;transform:scaleX(1.0012);-webkit-text-stroke:0.2px #1c1c1c">11</div><div class="t" style="left:155.00px;top:103.92px;line-height:18px;font-size:13.5px;font-weight:700;color:#2a2a2a;transform:scaleX(0.9538);">B</div><div class="t" style="left:213.00px;top:104.97px;line-height:16px;font-size:12.5px;font-weight:400;color:#2a2a2a;transform:scaleX(0.9965);">U</div><div class="t" style="left:584.40px;top:75.96px;line-height:14px;font-size:10.5px;font-weight:400;color:#1c1c1c;transform:scaleX(1.0578);-webkit-text-stroke:0.2px #1c1c1c">Wrap Text</div><div class="t" style="left:584.40px;top:105.86px;line-height:14px;font-size:10.5px;font-weight:400;color:#1c1c1c;transform:scaleX(1.0536);-webkit-text-stroke:0.2px #1c1c1c">Merge &amp; Center</div><div class="t" style="left:701.00px;top:74.87px;line-height:16px;font-size:12.5px;font-weight:400;color:#1c1c1c;transform:scaleX(0.9779);">General</div><div class="t" style="left:702.50px;top:105.15px;line-height:18px;font-size:14px;font-weight:400;color:#2a2a2a;transform:scaleX(1.1543);">$</div><div class="t" style="left:742.00px;top:103.65px;line-height:18px;font-size:14px;font-weight:400;color:#2a2a2a;transform:scaleX(1.0038);">%</div><div class="t" style="left:873.50px;top:104.96px;line-height:14px;font-size:10.5px;font-weight:400;color:#1c1c1c;transform:scaleX(1.0638);-webkit-text-stroke:0.2px #1c1c1c">Conditional</div><div class="t" style="left:874.50px;top:117.06px;line-height:14px;font-size:10.5px;font-weight:400;color:#1c1c1c;transform:scaleX(1.0740);-webkit-text-stroke:0.2px #1c1c1c">Formatting</div><div class="t" style="left:941.00px;top:104.96px;line-height:14px;font-size:10.5px;font-weight:400;color:#1c1c1c;transform:scaleX(1.0521);-webkit-text-stroke:0.2px #1c1c1c">Format</div><div class="t" style="left:938.00px;top:117.06px;line-height:14px;font-size:10.5px;font-weight:400;color:#1c1c1c;transform:scaleX(1.0534);-webkit-text-stroke:0.2px #1c1c1c">as Table</div><div class="t" style="left:1000.60px;top:104.96px;line-height:14px;font-size:10.5px;font-weight:400;color:#1c1c1c;transform:scaleX(1.0446);-webkit-text-stroke:0.2px #1c1c1c">Cell</div><div class="t" style="left:995.00px;top:117.06px;line-height:14px;font-size:10.5px;font-weight:400;color:#1c1c1c;transform:scaleX(1.0492);-webkit-text-stroke:0.2px #1c1c1c">Styles</div><div class="t" style="left:1060.60px;top:105.16px;line-height:14px;font-size:10.5px;font-weight:400;color:#1c1c1c;transform:scaleX(1.0622);-webkit-text-stroke:0.2px #1c1c1c">Insert</div><div class="t" style="left:1110.60px;top:105.16px;line-height:14px;font-size:10.5px;font-weight:400;color:#1c1c1c;transform:scaleX(1.0310);-webkit-text-stroke:0.2px #1c1c1c">Delete</div><div class="t" style="left:1160.60px;top:105.16px;line-height:14px;font-size:10.5px;font-weight:400;color:#1c1c1c;transform:scaleX(1.0341);-webkit-text-stroke:0.2px #1c1c1c">Format</div><div class="t" style="left:1246.50px;top:68.36px;line-height:14px;font-size:10.5px;font-weight:400;color:#1c1c1c;transform:scaleX(1.0300);-webkit-text-stroke:0.2px #1c1c1c">AutoSum</div><div class="t" style="left:1246.50px;top:91.16px;line-height:14px;font-size:10.5px;font-weight:400;color:#1c1c1c;transform:scaleX(0.9909);-webkit-text-stroke:0.2px #1c1c1c">Fill</div><div class="t" style="left:1246.50px;top:113.96px;line-height:14px;font-size:10.5px;font-weight:400;color:#1c1c1c;transform:scaleX(1.0162);-webkit-text-stroke:0.2px #1c1c1c">Clear</div><div class="t" style="left:1318.00px;top:104.96px;line-height:14px;font-size:10.5px;font-weight:400;color:#1c1c1c;transform:scaleX(1.0758);-webkit-text-stroke:0.2px #1c1c1c">Sort &amp;</div><div class="t" style="left:1321.60px;top:117.06px;line-height:14px;font-size:10.5px;font-weight:400;color:#1c1c1c;transform:scaleX(1.0452);-webkit-text-stroke:0.2px #1c1c1c">Filter</div><div class="t" style="left:46.63px;top:167.13px;line-height:13px;font-size:10px;font-weight:400;color:#444;transform:scaleX(0.8600);">A</div><div class="t" style="left:99.63px;top:167.13px;line-height:13px;font-size:10px;font-weight:400;color:#444;transform:scaleX(0.8600);">B</div><div class="t" style="left:152.39px;top:167.13px;line-height:13px;font-size:10px;font-weight:400;color:#444;transform:scaleX(0.8600);">C</div><div class="t" style="left:205.39px;top:167.13px;line-height:13px;font-size:10px;font-weight:400;color:#444;transform:scaleX(0.8600);">D</div><div class="t" style="left:258.63px;top:167.13px;line-height:13px;font-size:10px;font-weight:400;color:#444;transform:scaleX(0.8600);">E</div><div class="t" style="left:311.87px;top:167.13px;line-height:13px;font-size:10px;font-weight:400;color:#444;transform:scaleX(0.8600);">F</div><div class="t" style="left:364.15px;top:167.13px;line-height:13px;font-size:10px;font-weight:400;color:#444;transform:scaleX(0.8600);">G</div><div class="t" style="left:417.39px;top:167.13px;line-height:13px;font-size:10px;font-weight:400;color:#444;transform:scaleX(0.8600);">H</div><div class="t" style="left:472.30px;top:167.13px;line-height:13px;font-size:10px;font-weight:400;color:#444;transform:scaleX(0.8600);">I</div><div class="t" style="left:538.85px;top:167.13px;line-height:13px;font-size:10px;font-weight:400;color:#444;transform:scaleX(0.8600);">J</div><div class="t" style="left:630.13px;top:167.13px;line-height:13px;font-size:10px;font-weight:400;color:#444;transform:scaleX(0.8600);">K</div><div class="t" style="left:735.61px;top:167.13px;line-height:13px;font-size:10px;font-weight:400;color:#444;transform:scaleX(0.8600);">L</div><div class="t" style="left:841.41px;top:167.13px;line-height:13px;font-size:10px;font-weight:400;color:#0d6f3d;transform:scaleX(0.8600);">M</div><div class="t" style="left:922.39px;top:167.13px;line-height:13px;font-size:10px;font-weight:400;color:#444;transform:scaleX(0.8600);">N</div><div class="t" style="left:987.15px;top:167.13px;line-height:13px;font-size:10px;font-weight:400;color:#444;transform:scaleX(0.8600);">O</div><div class="t" style="left:1060.13px;top:167.13px;line-height:13px;font-size:10px;font-weight:400;color:#444;transform:scaleX(0.8600);">P</div><div class="t" style="left:1127.15px;top:167.13px;line-height:13px;font-size:10px;font-weight:400;color:#444;transform:scaleX(0.8600);">Q</div><div class="t" style="left:1186.39px;top:167.13px;line-height:13px;font-size:10px;font-weight:400;color:#444;transform:scaleX(0.8600);">R</div><div class="t" style="left:1239.63px;top:167.13px;line-height:13px;font-size:10px;font-weight:400;color:#444;transform:scaleX(0.8600);">S</div><div class="t" style="left:1292.87px;top:167.13px;line-height:13px;font-size:10px;font-weight:400;color:#444;transform:scaleX(0.8600);">T</div><div class="t" style="left:1345.39px;top:167.13px;line-height:13px;font-size:10px;font-weight:400;color:#444;transform:scaleX(0.8600);">U</div><div class="t" style="left:1397.63px;top:167.13px;line-height:13px;font-size:10px;font-weight:400;color:#444;transform:scaleX(0.8600);">V</div><div class="t" style="left:7.88px;top:185.26px;line-height:14px;font-size:10.5px;font-weight:400;color:#3c3c3c;transform:scaleX(1.0000);">1</div><div class="t" style="left:7.88px;top:200.26px;line-height:14px;font-size:10.5px;font-weight:400;color:#3c3c3c;transform:scaleX(1.0000);">2</div><div class="t" style="left:7.88px;top:215.26px;line-height:14px;font-size:10.5px;font-weight:400;color:#3c3c3c;transform:scaleX(1.0000);">3</div><div class="t" style="left:7.88px;top:230.26px;line-height:14px;font-size:10.5px;font-weight:400;color:#3c3c3c;transform:scaleX(1.0000);">4</div><div class="t" style="left:7.88px;top:245.26px;line-height:14px;font-size:10.5px;font-weight:400;color:#3c3c3c;transform:scaleX(1.0000);">5</div><div class="t" style="left:7.88px;top:260.26px;line-height:14px;font-size:10.5px;font-weight:400;color:#3c3c3c;transform:scaleX(1.0000);">6</div><div class="t" style="left:7.88px;top:275.26px;line-height:14px;font-size:10.5px;font-weight:400;color:#3c3c3c;transform:scaleX(1.0000);">7</div><div class="t" style="left:7.88px;top:290.26px;line-height:14px;font-size:10.5px;font-weight:400;color:#3c3c3c;transform:scaleX(1.0000);">8</div><div class="t" style="left:7.88px;top:305.26px;line-height:14px;font-size:10.5px;font-weight:400;color:#3c3c3c;transform:scaleX(1.0000);">9</div><div class="t" style="left:4.96px;top:320.26px;line-height:14px;font-size:10.5px;font-weight:400;color:#3c3c3c;transform:scaleX(1.0000);">10</div><div class="t" style="left:5.35px;top:335.26px;line-height:14px;font-size:10.5px;font-weight:400;color:#3c3c3c;transform:scaleX(1.0000);">11</div><div class="t" style="left:4.96px;top:350.26px;line-height:14px;font-size:10.5px;font-weight:400;color:#3c3c3c;transform:scaleX(1.0000);">12</div><div class="t" style="left:4.96px;top:365.26px;line-height:14px;font-size:10.5px;font-weight:400;color:#3c3c3c;transform:scaleX(1.0000);">13</div><div class="t" style="left:4.96px;top:380.26px;line-height:14px;font-size:10.5px;font-weight:400;color:#3c3c3c;transform:scaleX(1.0000);">14</div><div class="t" style="left:4.96px;top:395.26px;line-height:14px;font-size:10.5px;font-weight:400;color:#3c3c3c;transform:scaleX(1.0000);">15</div><div class="t" style="left:4.96px;top:410.26px;line-height:14px;font-size:10.5px;font-weight:400;color:#3c3c3c;transform:scaleX(1.0000);">16</div><div class="t" style="left:4.96px;top:425.26px;line-height:14px;font-size:10.5px;font-weight:400;color:#3c3c3c;transform:scaleX(1.0000);">17</div><div class="t" style="left:4.96px;top:440.26px;line-height:14px;font-size:10.5px;font-weight:400;color:#3c3c3c;transform:scaleX(1.0000);">18</div><div class="t" style="left:4.96px;top:455.26px;line-height:14px;font-size:10.5px;font-weight:400;color:#3c3c3c;transform:scaleX(1.0000);">19</div><div class="t" style="left:4.96px;top:470.26px;line-height:14px;font-size:10.5px;font-weight:400;color:#3c3c3c;transform:scaleX(1.0000);">20</div><div class="t" style="left:4.96px;top:485.26px;line-height:14px;font-size:10.5px;font-weight:400;color:#3c3c3c;transform:scaleX(1.0000);">21</div><div class="t" style="left:4.96px;top:500.26px;line-height:14px;font-size:10.5px;font-weight:400;color:#127a45;transform:scaleX(1.0000);">22</div><div class="t" style="left:4.96px;top:515.26px;line-height:14px;font-size:10.5px;font-weight:400;color:#3c3c3c;transform:scaleX(1.0000);">23</div><div class="t" style="left:4.96px;top:530.26px;line-height:14px;font-size:10.5px;font-weight:400;color:#3c3c3c;transform:scaleX(1.0000);">24</div><div class="t" style="left:4.96px;top:545.26px;line-height:14px;font-size:10.5px;font-weight:400;color:#3c3c3c;transform:scaleX(1.0000);">25</div><div class="t" style="left:4.96px;top:560.26px;line-height:14px;font-size:10.5px;font-weight:400;color:#3c3c3c;transform:scaleX(1.0000);">26</div><div class="t" style="left:4.96px;top:575.26px;line-height:14px;font-size:10.5px;font-weight:400;color:#3c3c3c;transform:scaleX(1.0000);">27</div><div class="t" style="left:4.96px;top:590.26px;line-height:14px;font-size:10.5px;font-weight:400;color:#3c3c3c;transform:scaleX(1.0000);">28</div><div class="t" style="left:4.96px;top:605.26px;line-height:14px;font-size:10.5px;font-weight:400;color:#3c3c3c;transform:scaleX(1.0000);">29</div><div class="t" style="left:4.96px;top:620.26px;line-height:14px;font-size:10.5px;font-weight:400;color:#3c3c3c;transform:scaleX(1.0000);">30</div><div class="t" style="left:4.96px;top:635.26px;line-height:14px;font-size:10.5px;font-weight:400;color:#3c3c3c;transform:scaleX(1.0000);">31</div><div class="t" style="left:4.96px;top:650.26px;line-height:14px;font-size:10.5px;font-weight:400;color:#3c3c3c;transform:scaleX(1.0000);">32</div><div class="t" style="left:4.96px;top:665.26px;line-height:14px;font-size:10.5px;font-weight:400;color:#3c3c3c;transform:scaleX(1.0000);">33</div><div class="t" style="left:4.96px;top:680.26px;line-height:14px;font-size:10.5px;font-weight:400;color:#3c3c3c;transform:scaleX(1.0000);">34</div><div class="t" style="left:4.96px;top:695.26px;line-height:14px;font-size:10.5px;font-weight:400;color:#3c3c3c;transform:scaleX(1.0000);">35</div><div class="t" style="left:4.96px;top:710.26px;line-height:14px;font-size:10.5px;font-weight:400;color:#3c3c3c;transform:scaleX(1.0000);">36</div><div class="t" style="left:4.96px;top:725.26px;line-height:14px;font-size:10.5px;font-weight:400;color:#3c3c3c;transform:scaleX(1.0000);">37</div><div class="t" style="left:4.96px;top:740.26px;line-height:14px;font-size:10.5px;font-weight:400;color:#3c3c3c;transform:scaleX(1.0000);">38</div><div class="t" style="left:4.96px;top:755.26px;line-height:14px;font-size:10.5px;font-weight:400;color:#3c3c3c;transform:scaleX(1.0000);">39</div><div class="t" style="left:4.96px;top:770.26px;line-height:14px;font-size:10.5px;font-weight:400;color:#3c3c3c;transform:scaleX(1.0000);">40</div><div class="t" style="left:4.96px;top:785.26px;line-height:14px;font-size:10.5px;font-weight:400;color:#3c3c3c;transform:scaleX(1.0000);">41</div><div class="t" style="left:4.96px;top:800.26px;line-height:14px;font-size:10.5px;font-weight:400;color:#3c3c3c;transform:scaleX(1.0000);">42</div><div class="t" style="left:4.96px;top:815.26px;line-height:14px;font-size:10.5px;font-weight:400;color:#3c3c3c;transform:scaleX(1.0000);">43</div><div class="t" style="left:25.00px;top:185.97px;line-height:13px;font-size:10.2px;font-weight:700;color:#000;transform:scaleX(0.9657);word-spacing:-0.9px;-webkit-text-stroke:0.15px #000">The following tutorial may be useful when calculating cumulative and annualized investment returns in Excel.</div><div class="t" style="left:25.00px;top:200.97px;line-height:13px;font-size:10.2px;font-weight:700;color:#000;transform:scaleX(0.9544);word-spacing:-0.9px;-webkit-text-stroke:0.15px #000">Cumulative Returns</div><div class="t" style="left:25.00px;top:215.97px;line-height:13px;font-size:10.2px;font-weight:400;color:#000;transform:scaleX(1.0345);word-spacing:-0.9px;-webkit-text-stroke:0.15px #000">1) The table on the right shows monthly investment returns beginning Jan 2010 through Dec 2011 (24 months of history)</div><div class="t" style="left:25.00px;top:230.97px;line-height:13px;font-size:10.2px;font-weight:400;color:#000;transform:scaleX(1.0221);word-spacing:-0.9px;-webkit-text-stroke:0.15px #000">2) The objective is to use Excel to calcuate the cumulative return and average annualized return over the 24 month period.</div><div class="t" style="left:25.00px;top:245.97px;line-height:13px;font-size:10.2px;font-weight:400;color:#000;transform:scaleX(1.0290);word-spacing:-0.9px;-webkit-text-stroke:0.15px #000">3) Recall cumulative returns are calculated by multpying one plus each monthly return and then subtracting 1. This is shown in</div><div class="t" style="left:43.00px;top:260.97px;line-height:13px;font-size:10.2px;font-weight:400;color:#000;transform:scaleX(1.0551);word-spacing:-0.9px;-webkit-text-stroke:0.15px #000">column Q which adds 1 to the each monthly return and then multiplies 1 + current monthly return by 1+ the cumulative prior monthly returns</div><div class="t" style="left:25.00px;top:275.97px;line-height:13px;font-size:10.2px;font-weight:400;color:#000;transform:scaleX(1.0132);word-spacing:-0.9px;-webkit-text-stroke:0.15px #000">4) Cell Q29 shows the cumulative returns of the series. But there is an easier way to do this as shown in Cell P29 using the =Product function in Excel</div><div class="t" style="left:25.00px;top:290.97px;line-height:13px;font-size:10.2px;font-weight:400;color:#000;transform:scaleX(1.0146);word-spacing:-0.9px;-webkit-text-stroke:0.15px #000">5) The formula in Cell P29 is  =PRODUCT(1+P5:P28)-1.  This formula is first adding 1 to the return in each cell from P5 through P28. then the formula</div><div class="t" style="left:35.00px;top:305.97px;line-height:13px;font-size:10.2px;font-weight:400;color:#000;transform:scaleX(1.0254);word-spacing:-0.9px;-webkit-text-stroke:0.15px #000">calcuates the product of each (1+Ri) where Ri is each of the monthly returns.  Then the formula subtracts 1 from the product.</div><div class="t" style="left:25.00px;top:320.97px;line-height:13px;font-size:10.2px;font-weight:400;color:#000;transform:scaleX(1.0213);word-spacing:-0.9px;-webkit-text-stroke:0.15px #000">6) Note that cells P29 and Q29 are identical. But the =Product function in Excel makes calculating returns much quicker and easier.</div><div class="t" style="left:25.00px;top:335.97px;line-height:13px;font-size:10.2px;font-weight:400;color:#000;transform:scaleX(1.0393);word-spacing:-0.9px;-webkit-text-stroke:0.15px #000">7) The cumulative return of this investment over the 2-year period is 10.27%. A $100 initial investment would have grown to $100*(1+.1027) = $110.27</div><div class="t" style="left:25.00px;top:365.97px;line-height:13px;font-size:10.2px;font-weight:700;color:#000;transform:scaleX(0.9633);word-spacing:-0.9px;-webkit-text-stroke:0.15px #000">Average Annualized Return</div><div class="t" style="left:25.00px;top:380.97px;line-height:13px;font-size:10.2px;font-weight:400;color:#000;transform:scaleX(0.9973);word-spacing:-0.9px;-webkit-text-stroke:0.15px #000">1) Recall the formula to calculate the average annualized returns - you must take 1 / Nth root of (1 + cumulative return). DO NOT TAKE THE CUMULATIVE</div><div class="t" style="left:33.50px;top:395.97px;line-height:13px;font-size:10.2px;font-weight:400;color:#000;transform:scaleX(0.8842);word-spacing:-0.9px;-webkit-text-stroke:0.15px #000">RETURN DIVIDED BY THE NUMBER OF YEARS. THAT WOULD BE INCORRECT!!</div><div class="t" style="left:25.00px;top:410.97px;line-height:13px;font-size:10.2px;font-weight:400;color:#000;transform:scaleX(1.0255);word-spacing:-0.9px;-webkit-text-stroke:0.15px #000">2) This problem is a little tricky because the data shows monthly returns but we want to calculate the average annualized returns. The trick is get the</div><div class="t" style="left:35.00px;top:425.97px;line-height:13px;font-size:10.2px;font-weight:400;color:#000;transform:scaleX(1.0318);word-spacing:-0.9px;-webkit-text-stroke:0.15px #000">exponent correct.</div><div class="t" style="left:25.00px;top:440.97px;line-height:13px;font-size:10.2px;font-weight:400;color:#000;transform:scaleX(1.0294);word-spacing:-0.9px;-webkit-text-stroke:0.15px #000">3) There are 24 months in the data set that contains monthly data where there are 12 months per year. So the Nth root exponent is 24/12 = 2.</div><div class="t" style="left:35.00px;top:455.97px;line-height:13px;font-size:10.2px;font-weight:400;color:#000;transform:scaleX(1.0405);word-spacing:-0.9px;-webkit-text-stroke:0.15px #000">So 1/Nth root is 1/2 = 0.5.  Another way to look at the Nth root is there are 24 months / 12 months per year. The "months" cancel and the</div><div class="t" style="left:35.00px;top:470.97px;line-height:13px;font-size:10.2px;font-weight:400;color:#000;transform:scaleX(1.0157);word-spacing:-0.9px;-webkit-text-stroke:0.15px #000">remaining units is "years"</div><div class="t" style="left:25.00px;top:485.97px;line-height:13px;font-size:10.2px;font-weight:400;color:#000;transform:scaleX(1.0202);word-spacing:-0.9px;-webkit-text-stroke:0.15px #000">4) This calculation is shown in cell P31.</div><div class="t" style="left:25.00px;top:515.97px;line-height:13px;font-size:10.2px;font-weight:700;color:#000;transform:scaleX(0.9624);word-spacing:-0.9px;-webkit-text-stroke:0.15px #000">Combining the Two</div><div class="t" style="left:25.00px;top:530.97px;line-height:13px;font-size:10.2px;font-weight:400;color:#000;transform:scaleX(1.0383);word-spacing:-0.9px;-webkit-text-stroke:0.15px #000">1) However, it still took us two calculation steps to calculate the average annualized return. We can do this more efficiently by incorporating the</div><div class="t" style="left:35.60px;top:545.97px;line-height:13px;font-size:10.2px;font-weight:400;color:#000;transform:scaleX(1.0370);word-spacing:-0.9px;-webkit-text-stroke:0.15px #000">1/Nth root exponent in the =Product formula. This is shown in cell P32</div><div class="t" style="left:25.00px;top:560.97px;line-height:13px;font-size:10.2px;font-weight:400;color:#000;transform:scaleX(1.0466);word-spacing:-0.9px;-webkit-text-stroke:0.15px #000">2) Notice that I used the =count function to determine the total number of monthly returns. In this example, we knew that there were 24 data points</div><div class="t" style="left:33.50px;top:575.97px;line-height:13px;font-size:10.2px;font-weight:400;color:#000;transform:scaleX(1.0246);word-spacing:-0.9px;-webkit-text-stroke:0.15px #000">So I could just as easily hard coded in "24" for the number of periods. However, often in finance we're analyzing return data much longer than 24</div><div class="t" style="left:35.00px;top:590.97px;line-height:13px;font-size:10.2px;font-weight:400;color:#000;transform:scaleX(1.0227);word-spacing:-0.9px;-webkit-text-stroke:0.15px #000">periods. So it's easier to have Excel count the number of periods in a data set using the =count function rather than wasting time doing it ourselves.</div><div class="t" style="left:25.00px;top:605.97px;line-height:13px;font-size:10.2px;font-weight:400;color:#000;transform:scaleX(1.0273);word-spacing:-0.9px;-webkit-text-stroke:0.15px #000">3) In fact, you can copy and paste this formula to different montly data sets and then easily adjust the range in the =Product and =Count functions</div><div class="t" style="left:25.00px;top:620.97px;line-height:13px;font-size:10.2px;font-weight:400;color:#000;transform:scaleX(1.0380);word-spacing:-0.9px;-webkit-text-stroke:0.15px #000">4) Lastly, you can still use the =Product function if your data set contains daily, weekly, or yearly returns. However, you will have to adjust the 1/Nth</div><div class="t" style="left:35.00px;top:635.97px;line-height:13px;font-size:10.2px;font-weight:400;color:#000;transform:scaleX(1.0294);word-spacing:-0.9px;-webkit-text-stroke:0.15px #000">root exponent accordingly using principles of Time Value of Money.</div><div class="t" style="left:25.00px;top:665.97px;line-height:13px;font-size:10.2px;font-weight:700;color:#000;transform:scaleX(0.9671);word-spacing:-0.9px;-webkit-text-stroke:0.15px #000">I hope you found this tutorial useful.</div><div class="t" style="left:961.25px;top:245.97px;line-height:13px;font-size:10.2px;font-weight:700;color:#000;transform:scaleX(1.0469);-webkit-text-stroke:0.1px #000">Month/Year</div><div class="t" style="left:1045.50px;top:245.97px;line-height:13px;font-size:10.2px;font-weight:700;color:#000;transform:scaleX(0.9286);-webkit-text-stroke:0.1px #000">Returns</div><div class="t" style="left:1104.25px;top:245.97px;line-height:13px;font-size:10.2px;font-weight:700;color:#000;transform:scaleX(0.9095);-webkit-text-stroke:0.1px #000">Cumul Rtns</div><div class="t" style="left:974.01px;top:260.97px;line-height:13px;font-size:10.2px;font-weight:400;color:#000;transform:scaleX(1.0200);-webkit-text-stroke:0.15px #000">Jan-10</div><div class="t" style="left:1047.57px;top:260.97px;line-height:13px;font-size:10.2px;font-weight:400;color:#000;transform:scaleX(1.0200);-webkit-text-stroke:0.15px #000">1.48%</div><div class="t" style="left:1114.30px;top:260.97px;line-height:13px;font-size:10.2px;font-weight:400;color:#000;transform:scaleX(1.0200);-webkit-text-stroke:0.15px #000">1.0148</div><div class="t" style="left:973.44px;top:275.97px;line-height:13px;font-size:10.2px;font-weight:400;color:#000;transform:scaleX(1.0200);-webkit-text-stroke:0.15px #000">Feb-10</div><div class="t" style="left:1047.57px;top:275.97px;line-height:13px;font-size:10.2px;font-weight:400;color:#000;transform:scaleX(1.0200);-webkit-text-stroke:0.15px #000">0.92%</div><div class="t" style="left:1114.30px;top:275.97px;line-height:13px;font-size:10.2px;font-weight:400;color:#000;transform:scaleX(1.0200);-webkit-text-stroke:0.15px #000">1.0241</div><div class="t" style="left:973.44px;top:290.97px;line-height:13px;font-size:10.2px;font-weight:400;color:#000;transform:scaleX(1.0200);-webkit-text-stroke:0.15px #000">Mar-10</div><div class="t" style="left:1045.04px;top:290.97px;line-height:13px;font-size:10.2px;font-weight:400;color:#000;transform:scaleX(1.0200);-webkit-text-stroke:0.15px #000">-0.78%</div><div class="t" style="left:1114.30px;top:290.97px;line-height:13px;font-size:10.2px;font-weight:400;color:#000;transform:scaleX(1.0200);-webkit-text-stroke:0.15px #000">1.0161</div><div class="t" style="left:974.31px;top:305.97px;line-height:13px;font-size:10.2px;font-weight:400;color:#000;transform:scaleX(1.0200);-webkit-text-stroke:0.15px #000">Apr-10</div><div class="t" style="left:1047.57px;top:305.97px;line-height:13px;font-size:10.2px;font-weight:400;color:#000;transform:scaleX(1.0200);-webkit-text-stroke:0.15px #000">0.18%</div><div class="t" style="left:1114.30px;top:305.97px;line-height:13px;font-size:10.2px;font-weight:400;color:#000;transform:scaleX(1.0200);-webkit-text-stroke:0.15px #000">1.0180</div><div class="t" style="left:972.57px;top:320.97px;line-height:13px;font-size:10.2px;font-weight:400;color:#000;transform:scaleX(1.0200);-webkit-text-stroke:0.15px #000">May-10</div><div class="t" style="left:1047.57px;top:320.97px;line-height:13px;font-size:10.2px;font-weight:400;color:#000;transform:scaleX(1.0200);-webkit-text-stroke:0.15px #000">0.80%</div><div class="t" style="left:1114.30px;top:320.97px;line-height:13px;font-size:10.2px;font-weight:400;color:#000;transform:scaleX(1.0200);-webkit-text-stroke:0.15px #000">1.0261</div><div class="t" style="left:974.01px;top:335.97px;line-height:13px;font-size:10.2px;font-weight:400;color:#000;transform:scaleX(1.0200);-webkit-text-stroke:0.15px #000">Jun-10</div><div class="t" style="left:1045.04px;top:335.97px;line-height:13px;font-size:10.2px;font-weight:400;color:#000;transform:scaleX(1.0200);-webkit-text-stroke:0.15px #000">-0.15%</div><div class="t" style="left:1114.30px;top:335.97px;line-height:13px;font-size:10.2px;font-weight:400;color:#000;transform:scaleX(1.0200);-webkit-text-stroke:0.15px #000">1.0246</div><div class="t" style="left:975.75px;top:350.97px;line-height:13px;font-size:10.2px;font-weight:400;color:#000;transform:scaleX(1.0200);-webkit-text-stroke:0.15px #000">Jul-10</div><div class="t" style="left:1047.57px;top:350.97px;line-height:13px;font-size:10.2px;font-weight:400;color:#000;transform:scaleX(1.0200);-webkit-text-stroke:0.15px #000">0.12%</div><div class="t" style="left:1114.30px;top:350.97px;line-height:13px;font-size:10.2px;font-weight:400;color:#000;transform:scaleX(1.0200);-webkit-text-stroke:0.15px #000">1.0258</div><div class="t" style="left:973.14px;top:365.97px;line-height:13px;font-size:10.2px;font-weight:400;color:#000;transform:scaleX(1.0200);-webkit-text-stroke:0.15px #000">Aug-10</div><div class="t" style="left:1045.04px;top:365.97px;line-height:13px;font-size:10.2px;font-weight:400;color:#000;transform:scaleX(1.0200);-webkit-text-stroke:0.15px #000">-0.19%</div><div class="t" style="left:1114.30px;top:365.97px;line-height:13px;font-size:10.2px;font-weight:400;color:#000;transform:scaleX(1.0200);-webkit-text-stroke:0.15px #000">1.0238</div><div class="t" style="left:973.14px;top:380.97px;line-height:13px;font-size:10.2px;font-weight:400;color:#000;transform:scaleX(1.0200);-webkit-text-stroke:0.15px #000">Sep-10</div><div class="t" style="left:1047.57px;top:380.97px;line-height:13px;font-size:10.2px;font-weight:400;color:#000;transform:scaleX(1.0200);-webkit-text-stroke:0.15px #000">1.53%</div><div class="t" style="left:1114.30px;top:380.97px;line-height:13px;font-size:10.2px;font-weight:400;color:#000;transform:scaleX(1.0200);-webkit-text-stroke:0.15px #000">1.0395</div><div class="t" style="left:974.31px;top:395.97px;line-height:13px;font-size:10.2px;font-weight:400;color:#000;transform:scaleX(1.0200);-webkit-text-stroke:0.15px #000">Oct-10</div><div class="t" style="left:1045.04px;top:395.97px;line-height:13px;font-size:10.2px;font-weight:400;color:#000;transform:scaleX(1.0200);-webkit-text-stroke:0.15px #000">-0.47%</div><div class="t" style="left:1114.30px;top:395.97px;line-height:13px;font-size:10.2px;font-weight:400;color:#000;transform:scaleX(1.0200);-webkit-text-stroke:0.15px #000">1.0346</div><div class="t" style="left:973.15px;top:410.97px;line-height:13px;font-size:10.2px;font-weight:400;color:#000;transform:scaleX(1.0200);-webkit-text-stroke:0.15px #000">Nov-10</div><div class="t" style="left:1047.57px;top:410.97px;line-height:13px;font-size:10.2px;font-weight:400;color:#000;transform:scaleX(1.0200);-webkit-text-stroke:0.15px #000">0.57%</div><div class="t" style="left:1114.30px;top:410.97px;line-height:13px;font-size:10.2px;font-weight:400;color:#000;transform:scaleX(1.0200);-webkit-text-stroke:0.15px #000">1.0405</div><div class="t" style="left:973.15px;top:425.97px;line-height:13px;font-size:10.2px;font-weight:400;color:#000;transform:scaleX(1.0200);-webkit-text-stroke:0.15px #000">Dec-10</div><div class="t" style="left:1045.04px;top:425.97px;line-height:13px;font-size:10.2px;font-weight:400;color:#000;transform:scaleX(1.0200);-webkit-text-stroke:0.15px #000">-0.48%</div><div class="t" style="left:1114.30px;top:425.97px;line-height:13px;font-size:10.2px;font-weight:400;color:#000;transform:scaleX(1.0200);-webkit-text-stroke:0.15px #000">1.0355</div><div class="t" style="left:974.39px;top:440.97px;line-height:13px;font-size:10.2px;font-weight:400;color:#000;transform:scaleX(1.0200);-webkit-text-stroke:0.15px #000">Jan-11</div><div class="t" style="left:1047.57px;top:440.97px;line-height:13px;font-size:10.2px;font-weight:400;color:#000;transform:scaleX(1.0200);-webkit-text-stroke:0.15px #000">0.58%</div><div class="t" style="left:1114.30px;top:440.97px;line-height:13px;font-size:10.2px;font-weight:400;color:#000;transform:scaleX(1.0200);-webkit-text-stroke:0.15px #000">1.0415</div><div class="t" style="left:973.82px;top:455.97px;line-height:13px;font-size:10.2px;font-weight:400;color:#000;transform:scaleX(1.0200);-webkit-text-stroke:0.15px #000">Feb-11</div><div class="t" style="left:1047.57px;top:455.97px;line-height:13px;font-size:10.2px;font-weight:400;color:#000;transform:scaleX(1.0200);-webkit-text-stroke:0.15px #000">0.27%</div><div class="t" style="left:1114.30px;top:455.97px;line-height:13px;font-size:10.2px;font-weight:400;color:#000;transform:scaleX(1.0200);-webkit-text-stroke:0.15px #000">1.0443</div><div class="t" style="left:973.83px;top:470.97px;line-height:13px;font-size:10.2px;font-weight:400;color:#000;transform:scaleX(1.0200);-webkit-text-stroke:0.15px #000">Mar-11</div><div class="t" style="left:1047.57px;top:470.97px;line-height:13px;font-size:10.2px;font-weight:400;color:#000;transform:scaleX(1.0200);-webkit-text-stroke:0.15px #000">1.43%</div><div class="t" style="left:1114.30px;top:470.97px;line-height:13px;font-size:10.2px;font-weight:400;color:#000;transform:scaleX(1.0200);-webkit-text-stroke:0.15px #000">1.0593</div><div class="t" style="left:974.69px;top:485.97px;line-height:13px;font-size:10.2px;font-weight:400;color:#000;transform:scaleX(1.0200);-webkit-text-stroke:0.15px #000">Apr-11</div><div class="t" style="left:1047.57px;top:485.97px;line-height:13px;font-size:10.2px;font-weight:400;color:#000;transform:scaleX(1.0200);-webkit-text-stroke:0.15px #000">0.70%</div><div class="t" style="left:1114.30px;top:485.97px;line-height:13px;font-size:10.2px;font-weight:400;color:#000;transform:scaleX(1.0200);-webkit-text-stroke:0.15px #000">1.0667</div><div class="t" style="left:972.96px;top:500.97px;line-height:13px;font-size:10.2px;font-weight:400;color:#000;transform:scaleX(1.0200);-webkit-text-stroke:0.15px #000">May-11</div><div class="t" style="left:1047.57px;top:500.97px;line-height:13px;font-size:10.2px;font-weight:400;color:#000;transform:scaleX(1.0200);-webkit-text-stroke:0.15px #000">1.52%</div><div class="t" style="left:1114.30px;top:500.97px;line-height:13px;font-size:10.2px;font-weight:400;color:#000;transform:scaleX(1.0200);-webkit-text-stroke:0.15px #000">1.0829</div><div class="t" style="left:974.39px;top:515.97px;line-height:13px;font-size:10.2px;font-weight:400;color:#000;transform:scaleX(1.0200);-webkit-text-stroke:0.15px #000">Jun-11</div><div class="t" style="left:1045.04px;top:515.97px;line-height:13px;font-size:10.2px;font-weight:400;color:#000;transform:scaleX(1.0200);-webkit-text-stroke:0.15px #000">-0.10%</div><div class="t" style="left:1114.30px;top:515.97px;line-height:13px;font-size:10.2px;font-weight:400;color:#000;transform:scaleX(1.0200);-webkit-text-stroke:0.15px #000">1.0818</div><div class="t" style="left:976.13px;top:530.97px;line-height:13px;font-size:10.2px;font-weight:400;color:#000;transform:scaleX(1.0200);-webkit-text-stroke:0.15px #000">Jul-11</div><div class="t" style="left:1045.04px;top:530.97px;line-height:13px;font-size:10.2px;font-weight:400;color:#000;transform:scaleX(1.0200);-webkit-text-stroke:0.15px #000">-0.25%</div><div class="t" style="left:1114.30px;top:530.97px;line-height:13px;font-size:10.2px;font-weight:400;color:#000;transform:scaleX(1.0200);-webkit-text-stroke:0.15px #000">1.0791</div><div class="t" style="left:973.53px;top:545.97px;line-height:13px;font-size:10.2px;font-weight:400;color:#000;transform:scaleX(1.0200);-webkit-text-stroke:0.15px #000">Aug-11</div><div class="t" style="left:1047.57px;top:545.97px;line-height:13px;font-size:10.2px;font-weight:400;color:#000;transform:scaleX(1.0200);-webkit-text-stroke:0.15px #000">0.73%</div><div class="t" style="left:1114.30px;top:545.97px;line-height:13px;font-size:10.2px;font-weight:400;color:#000;transform:scaleX(1.0200);-webkit-text-stroke:0.15px #000">1.0870</div><div class="t" style="left:973.53px;top:560.97px;line-height:13px;font-size:10.2px;font-weight:400;color:#000;transform:scaleX(1.0200);-webkit-text-stroke:0.15px #000">Sep-11</div><div class="t" style="left:1045.04px;top:560.97px;line-height:13px;font-size:10.2px;font-weight:400;color:#000;transform:scaleX(1.0200);-webkit-text-stroke:0.15px #000">-0.21%</div><div class="t" style="left:1114.30px;top:560.97px;line-height:13px;font-size:10.2px;font-weight:400;color:#000;transform:scaleX(1.0200);-webkit-text-stroke:0.15px #000">1.0847</div><div class="t" style="left:974.69px;top:575.97px;line-height:13px;font-size:10.2px;font-weight:400;color:#000;transform:scaleX(1.0200);-webkit-text-stroke:0.15px #000">Oct-11</div><div class="t" style="left:1047.57px;top:575.97px;line-height:13px;font-size:10.2px;font-weight:400;color:#000;transform:scaleX(1.0200);-webkit-text-stroke:0.15px #000">1.32%</div><div class="t" style="left:1114.30px;top:575.97px;line-height:13px;font-size:10.2px;font-weight:400;color:#000;transform:scaleX(1.0200);-webkit-text-stroke:0.15px #000">1.0990</div><div class="t" style="left:973.53px;top:590.97px;line-height:13px;font-size:10.2px;font-weight:400;color:#000;transform:scaleX(1.0200);-webkit-text-stroke:0.15px #000">Nov-11</div><div class="t" style="left:1045.04px;top:590.97px;line-height:13px;font-size:10.2px;font-weight:400;color:#000;transform:scaleX(1.0200);-webkit-text-stroke:0.15px #000">-0.23%</div><div class="t" style="left:1114.30px;top:590.97px;line-height:13px;font-size:10.2px;font-weight:400;color:#000;transform:scaleX(1.0200);-webkit-text-stroke:0.15px #000">1.0965</div><div class="t" style="left:973.53px;top:605.97px;line-height:13px;font-size:10.2px;font-weight:400;color:#000;transform:scaleX(1.0200);-webkit-text-stroke:0.15px #000">Dec-11</div><div class="t" style="left:1047.57px;top:605.97px;line-height:13px;font-size:10.2px;font-weight:400;color:#000;transform:scaleX(1.0200);-webkit-text-stroke:0.15px #000">0.57%</div><div class="t" style="left:1114.30px;top:605.97px;line-height:13px;font-size:10.2px;font-weight:400;color:#000;transform:scaleX(1.0200);-webkit-text-stroke:0.15px #000">1.1027</div><div class="t" style="left:1002.50px;top:620.97px;line-height:13px;font-size:10.2px;font-weight:400;color:#000;transform:scaleX(1.0218);">Total</div><div class="t" style="left:1044.67px;top:620.97px;line-height:13px;font-size:10.2px;font-weight:400;color:#000;transform:scaleX(1.0200);-webkit-text-stroke:0.15px #000">10.27%</div><div class="t" style="left:1112.57px;top:620.97px;line-height:13px;font-size:10.2px;font-weight:400;color:#000;transform:scaleX(1.0200);-webkit-text-stroke:0.15px #000">10.27%</div><div class="t" style="left:918.00px;top:635.97px;line-height:13px;font-size:10.2px;font-weight:400;color:#000;transform:scaleX(0.9513);">Average Annualized  Rtn</div><div class="t" style="left:918.00px;top:650.97px;line-height:13px;font-size:10.2px;font-weight:400;color:#000;transform:scaleX(0.9513);">Average Annualized  Rtn</div><div class="t" style="left:1047.57px;top:635.97px;line-height:13px;font-size:10.2px;font-weight:400;color:#000;transform:scaleX(1.0200);-webkit-text-stroke:0.15px #000">5.01%</div><div class="t" style="left:1047.57px;top:650.97px;line-height:13px;font-size:10.2px;font-weight:400;color:#000;transform:scaleX(1.0200);-webkit-text-stroke:0.15px #000">5.01%</div>
<div class="a" style="left:790px;top:498px;width:109px;height:18px;box-sizing:border-box;border:2px solid #137a43"></div><div class="a" style="left:893px;top:510px;width:8px;height:8px;background:#fff"></div><div class="a" style="left:895px;top:512px;width:5px;height:5px;background:#137a43"></div><div class="a" style="left:791px;top:183px;width:107px;height:2px;background:#137a43"></div><div class="a" style="left:21px;top:499px;width:2px;height:16px;background:#137a43"></div><div class="a" style="left:0;top:830px;width:22px;height:6px;overflow:hidden"><div class="t" style="left:5px;top:1px;font-size:10.5px;line-height:14px;color:#3c3c3c">44</div></div>
</body></html>
